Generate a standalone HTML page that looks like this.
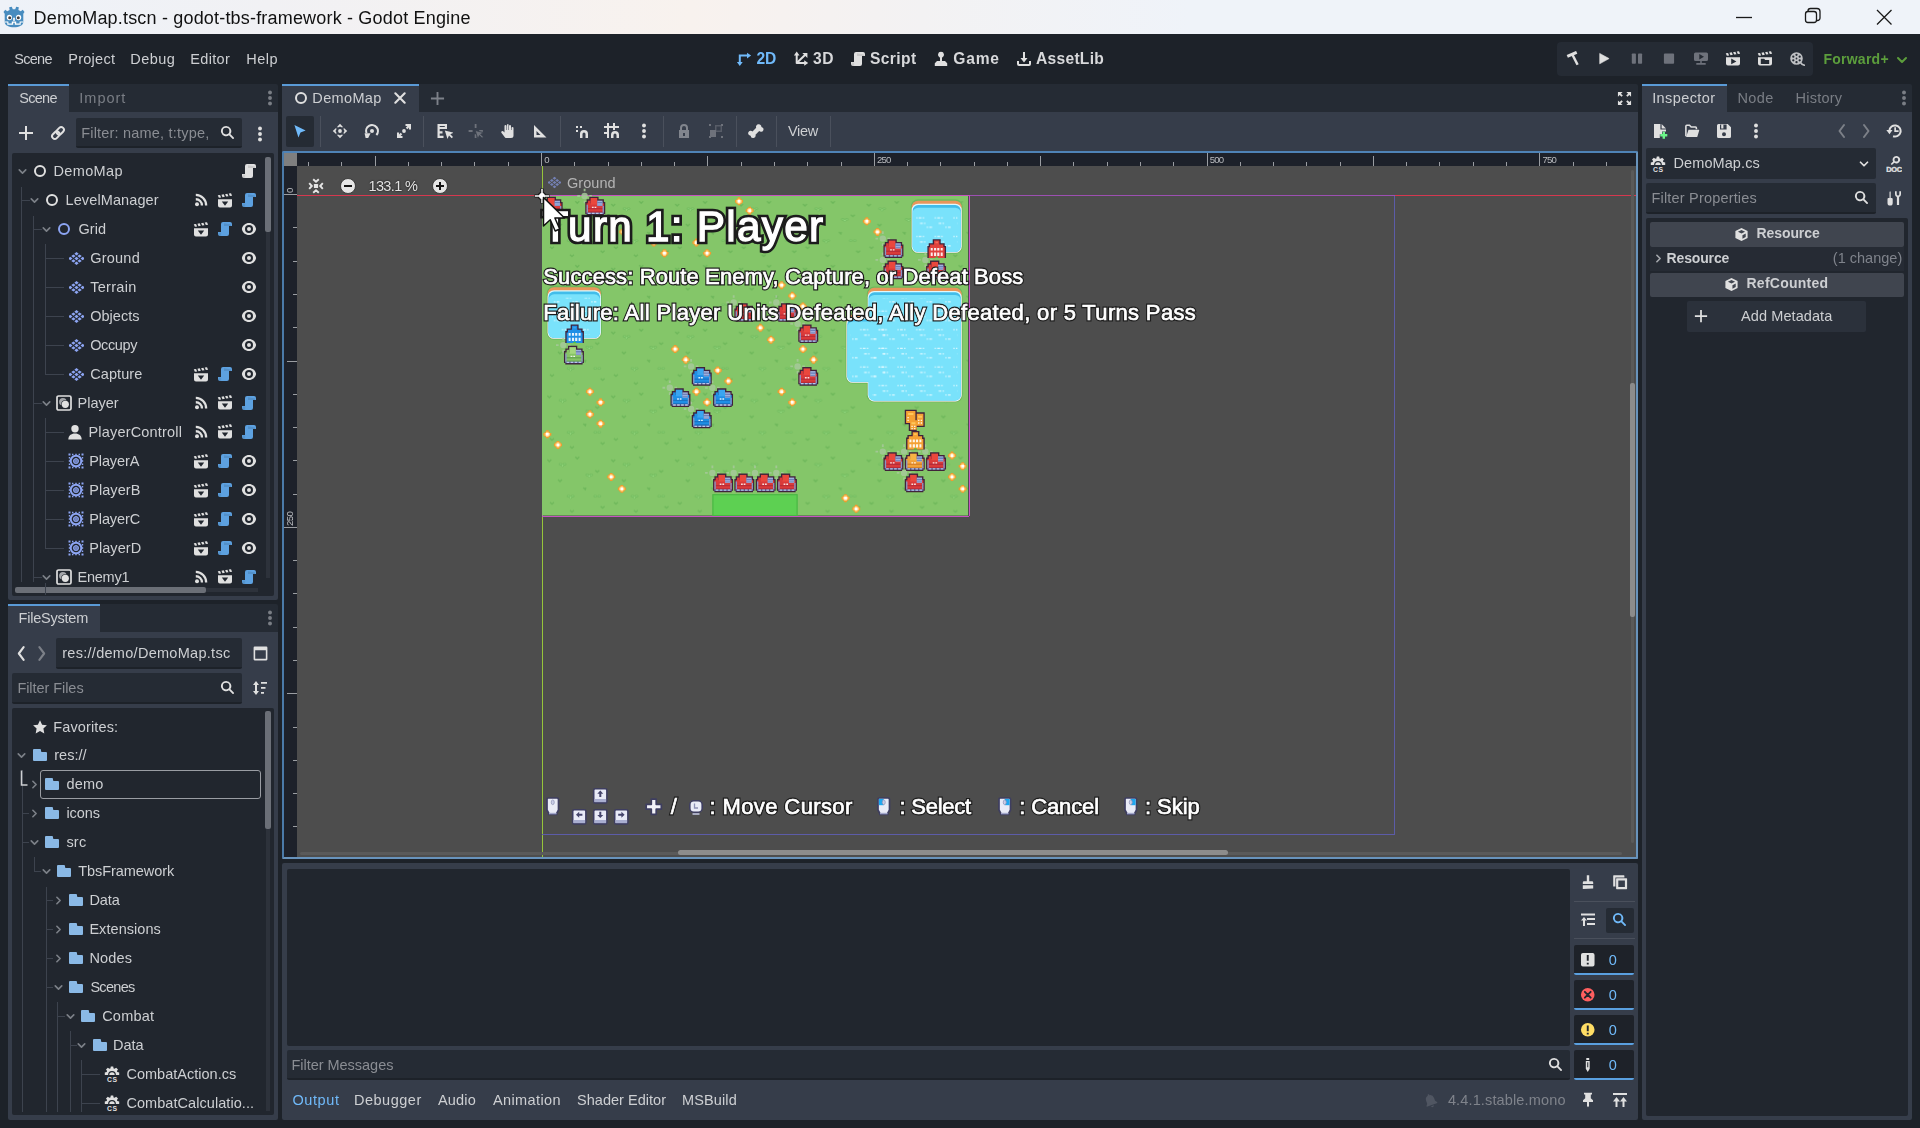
<!DOCTYPE html><html><head><meta charset="utf-8"><title>DemoMap.tscn - Godot Engine</title><style>
html,body{margin:0;padding:0;background:#1d2229}
#r{position:relative;width:1920px;height:1128px;overflow:hidden;background:#1d2229;font-family:"Liberation Sans",sans-serif}
#r div,#r span,#r svg{position:absolute}
#r span{white-space:pre;will-change:opacity}
#r svg{fill:currentColor;overflow:visible}
</style></head><body><svg width="0" height="0" style="position:absolute"><defs><symbol id="i-add" viewBox="0 0 16 16"><path d="M7 1v6H1v2h6v6h2V9h6V7H9V1z"/></symbol><symbol id="i-link" viewBox="0 0 16 16"><g transform="rotate(-45 8 8)" fill="none" stroke="currentColor" stroke-width="2"><rect x="0.8" y="5.3" width="8.2" height="5.4" rx="2.7"/><rect x="7" y="5.3" width="8.2" height="5.4" rx="2.7"/></g></symbol><symbol id="i-search" viewBox="0 0 16 16"><path d="M6.5 1a5.5 5.5 0 1 0 3.1 10.05l3.7 3.7a1 1 0 0 0 1.4-1.4l-3.65-3.7A5.5 5.5 0 0 0 6.5 1zm0 2a3.5 3.5 0 0 1 0 7 3.5 3.5 0 0 1 0-7z"/></symbol><symbol id="i-dots" viewBox="0 0 16 16"><circle cx="8" cy="2.5" r="1.95"/><circle cx="8" cy="8" r="1.95"/><circle cx="8" cy="13.5" r="1.95"/></symbol><symbol id="i-node" viewBox="0 0 16 16"><circle cx="8" cy="8" r="5" fill="none" stroke="currentColor" stroke-width="2"/></symbol><symbol id="i-script" viewBox="0 0 16 16"><path d="M6 1a2 2 0 0 0-2 2v8H1v2a2 2 0 0 0 2 2h7a2 2 0 0 0 2-2V5h3V3a2 2 0 0 0-2-2z"/><path d="M7 2.200v2.800h7.200V3.600z" fill="#000" opacity=".1"/><path d="M1.400 11.500h2.800v3.200a2 2 0 0 1-2.800-1.700z" fill="#000" opacity=".08"/></symbol><symbol id="i-eye" viewBox="0 0 16 16"><path fill-rule="evenodd" d="M8 2C4.44 2 1.53 4.49.94 7.79a1 1 0 0 0 0 .42C1.53 11.51 4.44 14 8 14s6.47-2.49 7.06-5.79a1 1 0 0 0 0-.42C14.47 4.49 11.56 2 8 2zm0 2a4 4 0 0 1 0 8 4 4 0 0 1 0-8zm0 2a2 2 0 0 0 0 4 2 2 0 0 0 0-4z"/></symbol><symbol id="i-signals" viewBox="0 0 16 16"><path d="M2.800 1.800v2.300A9.300 9.300 0 0 1 12 13.400h2.300A11.600 11.600 0 0 0 2.800 1.800zM2.800 6.100v2.300a5 5 0 0 1 5 5h2.300a7.300 7.300 0 0 0-7.300-7.300z"/><circle cx="4" cy="12.200" r="2"/></symbol><symbol id="i-instopt" viewBox="0 0 16 16"><path fill-rule="evenodd" d="M1 6.300v6.200a2 2 0 0 0 2 2h10a2 2 0 0 0 2-2V6.300zm3.800 2.200h6.400L8 12.800z"/><g transform="rotate(-9 1 5)"><path d="M1.200 2.300h2.300l.7 2.600H1.900zM4.900 2.300h2.300l.7 2.600H5.600zM8.600 2.300h2.300l.7 2.600H9.300zM12.300 2.300h2.300l.7 2.600H13z"/></g></symbol><symbol id="i-tilemap" viewBox="0 0 16 16"><g transform="translate(8 8) scale(1 .78) rotate(45)"><rect x="-6.300" y="-6.300" width="3.300" height="3.300"/><rect x="-1.650" y="-6.300" width="3.300" height="3.300"/><rect x="3" y="-6.300" width="3.300" height="3.300"/><rect x="-6.300" y="-1.650" width="3.300" height="3.300"/><rect x="-1.650" y="-1.650" width="3.300" height="3.300"/><rect x="3" y="-1.650" width="3.300" height="3.300"/><rect x="-6.300" y="3" width="3.300" height="3.300"/><rect x="-1.650" y="3" width="3.300" height="3.300"/><rect x="3" y="3" width="3.300" height="3.300"/></g></symbol><symbol id="i-folder" viewBox="0 0 16 16"><path d="M2 2a1 1 0 0 0-1 1v10a1 1 0 0 0 1 1h12a1 1 0 0 0 1-1V6a1 1 0 0 0-1-1h-4a1 1 0 0 1-1-1V3a1 1 0 0 0-1-1z"/></symbol><symbol id="i-star" viewBox="0 0 16 16"><path d="M8 1.300l2.100 4.400 4.800.600-3.500 3.300.9 4.800L8 12l-4.300 2.400.9-4.800L1.100 6.300l4.800-.6z"/></symbol><symbol id="i-chd" viewBox="0 0 16 16"><path d="M4 6l4 4 4-4" fill="none" stroke="currentColor" stroke-width="2" stroke-linecap="round" stroke-linejoin="round"/></symbol><symbol id="i-chr" viewBox="0 0 16 16"><path d="M6 4l4 4-4 4" fill="none" stroke="currentColor" stroke-width="2" stroke-linecap="round" stroke-linejoin="round"/></symbol><symbol id="i-chl" viewBox="0 0 16 16"><path d="M10 2L5.500 8l4.500 6" fill="none" stroke="currentColor" stroke-width="2" stroke-linecap="round" stroke-linejoin="round"/></symbol><symbol id="i-chrr" viewBox="0 0 16 16"><path d="M6 2l4.500 6L6 14" fill="none" stroke="currentColor" stroke-width="2" stroke-linecap="round" stroke-linejoin="round"/></symbol><symbol id="i-cs" viewBox="0 0 16 16"><path d="M6.800 .5l-.4 1.900-1 .4L3.800 1.700 2 3.500l1.100 1.600-.4 1L.8 6.500V9h3.300a3.900 3.900 0 0 1 7.800 0h3.300V6.500l-1.900-.4-.4-1L14 3.500l-1.800-1.800-1.600 1.100-1-.4L9.200.5zM8 6.300A2.700 2.700 0 0 0 5.300 9h5.400A2.700 2.700 0 0 0 8 6.300z"/><text x="8.200" y="15.800" font-size="6.800" font-weight="700" text-anchor="middle" font-family="Liberation Sans, sans-serif" letter-spacing=".5">CS</text></symbol><symbol id="i-cursor" viewBox="0 0 16 16"><path d="M1.500 1l4.300 13.500 2.200-5.500 5.500-2.200z"/></symbol><symbol id="i-move" viewBox="0 0 16 16"><path d="M8 .8L4.800 4.300h2L8 3.400l1.200.9h2zM8 15.200l3.200-3.500h-2L8 12.600l-1.200-.9h-2zM.8 8l3.500 3.200v-2L3.400 8l.9-1.200v-2zM15.200 8l-3.500-3.200v2l.9 1.200-.9 1.200v2z"/><circle cx="8" cy="8" r="1.900"/></symbol><symbol id="i-rotate" viewBox="0 0 16 16"><path d="M12.38 11.95A5.9 5.9 0 1 0 2.53 10.21" fill="none" stroke="currentColor" stroke-width="2.100"/><path d="M.6 10.300h6l-2.400 4.700H1.600z"/><circle cx="8" cy="8" r="2"/></symbol><symbol id="i-scale" viewBox="0 0 16 16"><path d="M9.500 1H15v5.500h-2.100V4.600l-1.600 1.600-1.500-1.500 1.600-1.600H9.500zM6.500 15H1V9.500h2.100v1.900l1.600-1.600 1.500 1.500-1.600 1.600h1.900z"/><circle cx="8" cy="8" r="1.900"/></symbol><symbol id="i-listsel" viewBox="0 0 16 16"><path d="M1 1v14h6v-2.200H3.200v-2.300H6V8.300H3.200V6h7.300V1zm2.200 2h5.100v1H3.200zM8.300 7.500l2.700 8.400 1.500-3.400 2.700 2.700 1.300-1.300-2.700-2.700 3.400-1.500z" fill-rule="evenodd" transform="translate(-.5 0)"/></symbol><symbol id="i-curveadd" viewBox="0 0 16 16"><path d="M6.700 1h1.800v4H6.700zM.6 7.100h4v1.800h-4zM6.700 11.200h1.800v3.700H6.700zM11.200 7.100h3.700v1.800h-3.700z"/><path d="M7.200 7.500l2.700 8.400 1.500-3.400 2.700 2.700 1.300-1.300-2.700-2.700 3.400-1.500z" stroke="#363d4a" stroke-width=".8"/></symbol><symbol id="i-hand" viewBox="0 0 16 16"><path d="M8 1a1 1 0 0 0-1 1v5H6.500V3a1 1 0 0 0-2 0v6.500L3.200 8.300a1.200 1.200 0 0 0-1.800 1.500L5 14.500a2 2 0 0 0 1.500.5H11a2.500 2.500 0 0 0 2.500-2.500V5a1 1 0 0 0-2 0v2H11V3a1 1 0 0 0-2 0v4h-.5V2A1 1 0 0 0 8 1z"/></symbol><symbol id="i-ruler" viewBox="0 0 16 16"><path fill-rule="evenodd" d="M2 2v12.500h12.500zM4.500 8l4 4h-4z"/></symbol><symbol id="i-snap" viewBox="0 0 16 16"><path d="M3 3h2v2H3zM7 3h2v2H7zM3 7h2v2H3zM11 7a4 4 0 0 0-4 4v4h2.500v-4a1.500 1.500 0 0 1 3 0v4H15v-4a4 4 0 0 0-4-4z"/></symbol><symbol id="i-snapgrid" viewBox="0 0 16 16"><path d="M3 0v3H0v2h3v4H0v2h3v4h2V5h4v2h2V5h4V3h-4V0H9v3H5V0zM11 8a4 4 0 0 0-4 4v3h2.500v-3a1.500 1.500 0 0 1 3 0v3H15v-3a4 4 0 0 0-4-4z"/></symbol><symbol id="i-lock" viewBox="0 0 16 16"><path fill-rule="evenodd" d="M8 1a4 4 0 0 0-4 4v2H3v8h10V7h-1V5a4 4 0 0 0-4-4zm0 2a2 2 0 0 1 2 2v2H6V5a2 2 0 0 1 2-2zM7 10h2v3H7z"/></symbol><symbol id="i-group" viewBox="0 0 16 16"><path d="M1 1h2v2H1zM1 13h2v2H1zM13 13h2v2h-2zM13 1h2v2h-2zM2 7h6v7H2z"/><path fill-rule="evenodd" d="M7 2h7v7H7zM8.500 3.500v4h4v-4z" opacity=".6"/></symbol><symbol id="i-bone" viewBox="0 0 16 16"><path d="M10.500 1a2.500 2.500 0 0 0-2.300 3.500L4.500 8.200A2.500 2.500 0 1 0 2.600 12.400a2.500 2.500 0 1 0 4.900-.9l3.700-3.700A2.500 2.500 0 1 0 13.400 3.600 2.500 2.500 0 0 0 10.500 1z" transform="translate(0 .3)"/></symbol><symbol id="i-hammer" viewBox="0 0 16 16"><path d="M2.300 5.300L11.700 1.300" fill="none" stroke="currentColor" stroke-width="3"/><path d="M7.200 3.300L12.600 13.800" fill="none" stroke="currentColor" stroke-width="2.500"/></symbol><symbol id="i-play" viewBox="0 0 16 16"><path d="M3.700 2.400L13.100 7.600 3.700 12.800z" stroke="currentColor" stroke-width=".6" stroke-linejoin="round"/></symbol><symbol id="i-pause" viewBox="0 0 16 16"><rect x="2.800" y="2.500" width="4.100" height="10.300" rx=".8"/><rect x="9" y="2.500" width="4.100" height="10.300" rx=".8"/></symbol><symbol id="i-stop" viewBox="0 0 16 16"><rect x="2.900" y="2.500" width="10.200" height="10.300" rx="1"/></symbol><symbol id="i-remote" viewBox="0 0 16 16"><path fill-rule="evenodd" d="M2.500 1.500h11A1.500 1.500 0 0 1 15 3v5.500a1.500 1.500 0 0 1-1.500 1.500h-11A1.500 1.500 0 0 1 1 8.500V3a1.500 1.500 0 0 1 1.500-1.500zM6.300 3l4.700 2.700-4.700 2.700z"/><path d="M7 10.200h2v1.600H7zM3.300 12h9.400v1.800H3.300z"/></symbol><symbol id="i-playscene" viewBox="0 0 16 16"><path fill-rule="evenodd" d="M1 6.300v6.200a2 2 0 0 0 2 2h10a2 2 0 0 0 2-2V6.300zm5.200 1.300l5.200 2.800-5.200 2.800z"/><g transform="rotate(-9 1 5)"><path d="M1.200 2.300h2.300l.7 2.600H1.900zM4.900 2.300h2.300l.7 2.600H5.600zM8.600 2.300h2.300l.7 2.600H9.300zM12.300 2.300h2.300l.7 2.600H13z"/></g></symbol><symbol id="i-playcustom" viewBox="0 0 16 16"><path fill-rule="evenodd" d="M1 6.300v6.200a2 2 0 0 0 2 2h10a2 2 0 0 0 2-2V6.300zm2.800 1.500h3.400l1 1.100h4v4.200H3.800z"/><g transform="rotate(-9 1 5)"><path d="M1.200 2.300h2.300l.7 2.600H1.900zM4.900 2.300h2.300l.7 2.600H5.600zM8.600 2.300h2.300l.7 2.600H9.300zM12.300 2.300h2.300l.7 2.600H13z"/></g></symbol><symbol id="i-movie" viewBox="0 0 16 16"><path fill-rule="evenodd" d="M7.500 1.200a6.300 6.300 0 1 0 0 12.600 6.300 6.300 0 1 0 0-12.600zM11.85 9.35a1.150 1.150 0 1 0-2.300 0 1.150 1.150 0 1 0 2.300 0zM8.65 11.20a1.150 1.150 0 1 0-2.300 0 1.150 1.150 0 1 0 2.300 0zM5.45 9.35a1.150 1.150 0 1 0-2.300 0 1.150 1.150 0 1 0 2.300 0zM5.45 5.65a1.150 1.150 0 1 0-2.300 0 1.150 1.150 0 1 0 2.300 0zM8.65 3.80a1.150 1.150 0 1 0-2.300 0 1.150 1.150 0 1 0 2.300 0zM11.85 5.65a1.150 1.150 0 1 0-2.300 0 1.150 1.150 0 1 0 2.300 0zM8.400 7.500a.9.900 0 1 0-1.800 0 .9.900 0 1 0 1.800 0z"/><path d="M11.500 11.500c1 1.500 2 2.500 3.700 2.700" fill="none" stroke="currentColor" stroke-width="1.800" stroke-linecap="round"/></symbol><symbol id="i-expand" viewBox="0 0 16 16"><path d="M1 1v5l1.800-1.800 2 2 1.400-1.400-2-2L6 1zM15 1h-5l1.800 1.800-2 2 1.400 1.400 2-2L15 6zM1 15h5l-1.800-1.800 2-2-1.400-1.400-2 2L1 10zM15 15v-5l-1.800 1.800-2-2-1.400 1.400 2 2L10 15z"/></symbol><symbol id="i-newdoc" viewBox="0 0 16 16"><path d="M2 1h6.400v5.600H14v2h-4v2.600H7.800V15H2z"/><path d="M9.600 1l4.400 4.400H9.600z"/><path d="M10.600 8.800v2.300H8.300v2.400h2.300v2.300H13v-2.300h2.300v-2.400H13V8.800z" fill="#6cf58a"/></symbol><symbol id="i-load" viewBox="0 0 16 16"><path d="M1.900 13.200V3.200a.9.900 0 0 1 .9-.9h2.700l1.700 1.700h4.300a.9.900 0 0 1 .9.900v1.400" fill="none" stroke="currentColor" stroke-width="1.600"/><path d="M4.500 6.800h10.200a.5.500 0 0 1 .5.600L13.400 13.500a.8.800 0 0 1-.8.500H2.100z"/></symbol><symbol id="i-save" viewBox="0 0 16 16"><path fill-rule="evenodd" d="M2.500 1A1.500 1.500 0 0 0 1 2.500v11A1.500 1.500 0 0 0 2.500 15h11a1.500 1.500 0 0 0 1.500-1.500V4.300L11.700 1zM4 1.500h6.600v5H4zM8 9.200a2 2 0 0 1 0 4 2 2 0 0 1 0-4z"/><path d="M5.200 1.500h2.200v4H5.200z"/></symbol><symbol id="i-history" viewBox="0 0 16 16"><path d="M3.42 7.51A5.6 5.6 0 1 1 7.08 13.26" fill="none" stroke="currentColor" stroke-width="2"/><path d="M.3 7l3.200 4.300L6.500 7z"/><path d="M8.300 4.300h1.700v3h2.600V9H8.300z"/></symbol><symbol id="i-docsearch" viewBox="0 0 16 16"><path fill-rule="evenodd" d="M10.300 0a3.700 3.700 0 0 0-3.200 5.500L4.700 7.900l1.200 1.200 2.400-2.400A3.700 3.700 0 1 0 10.300 0zm0 1.800a1.900 1.900 0 0 1 0 3.800 1.900 1.900 0 0 1 0-3.800z"/><text x="8" y="15.700" font-size="7.400" font-weight="700" text-anchor="middle" font-family="Liberation Sans, sans-serif" letter-spacing="-.35" stroke="currentColor" stroke-width=".35">DOC</text></symbol><symbol id="i-tools" viewBox="0 0 16 16"><path d="M3.500 2.200L4.100 1l.6 1.200V8h1a1 1 0 0 1 1 1v4a2.600 2.600 0 0 1-5.200 0V9a1 1 0 0 1 1-1h1zM9 1.300v3a3 3 0 0 0 1.900 2.800V15h2.200V7.100A3 3 0 0 0 15 4.300v-3h-1.700v3a1.300 1.300 0 0 1-2.600 0v-3z"/></symbol><symbol id="i-cube" viewBox="0 0 16 16"><path fill-rule="evenodd" d="M8 1L1.500 4.200v7.600L8 15l6.500-3.200V4.200zm0 2.200l3.800 1.900L8 7 4.200 5.100zM9 8.700l3.500-1.700v3.700L9 12.400z"/></symbol><symbol id="i-clear" viewBox="0 0 16 16"><path d="M6.800 1.200h2.400v6H12a1.200 1.200 0 0 1 1.200 1.200V10H2.800V8.400A1.200 1.200 0 0 1 4 7.200h2.800zM2.800 11.200h10.400v3.400L2.800 15z"/></symbol><symbol id="i-copy" viewBox="0 0 16 16"><path fill-rule="evenodd" d="M1.800 1.200a.6.600 0 0 0-.6.600v10.600h2.200V3.400h9V1.800a.6.600 0 0 0-.6-.6zM4.700 4.200a.6.600 0 0 0-.6.600v9.800a.6.600 0 0 0 .6.600h9.800a.6.600 0 0 0 .6-.6V4.800a.6.600 0 0 0-.6-.6zM6.300 6.400h6.600V13H6.300z"/></symbol><symbol id="i-collapse" viewBox="0 0 16 16"><path d="M1 1.500h14v2H1zM7 6h8v2H7zM7 11h8v2H7zM4 5L1 8.500h2V14h2V8.500h2z"/></symbol><symbol id="i-popup" viewBox="0 0 16 16"><path fill-rule="evenodd" d="M3 1a2 2 0 0 0-2 2v10a2 2 0 0 0 2 2h10a2 2 0 0 0 2-2V3a2 2 0 0 0-2-2zm4 2h2v6H7zm0 8h2v2H7z"/></symbol><symbol id="i-pen" viewBox="0 0 16 16"><path d="M6.500 1h3v2h-3zM6 4h4v8l-2 3.500L6 12zm1.500 1.500v5h1v-5z" fill-rule="evenodd"/></symbol><symbol id="i-pin" viewBox="0 0 16 16"><path d="M4 1.500v1.800h1.200v3.700L3 9v1.800h4v4l1 1.200 1-1.200v-4h4V9l-2.200-2V3.300H12V1.500z" transform="translate(0 -.8)"/></symbol><symbol id="i-expbottom" viewBox="0 0 16 16"><path d="M1 1v2h14V1zM4.500 5L1 9.500h2.500V15h2V9.500H8zM11.500 5L8 9.500h2.500V15h2V9.500H15z"/></symbol><symbol id="i-bell" viewBox="0 0 16 16"><path d="M8 1a1 1 0 0 0-1 1v.3A4.500 4.500 0 0 0 3.500 6.700V10L2 12v1h12v-1l-1.500-2V6.700A4.500 4.500 0 0 0 9 2.300V2a1 1 0 0 0-1-1zM6.500 14a1.500 1.500 0 0 0 3 0z" transform="rotate(-20 8 8)"/></symbol><symbol id="i-center" viewBox="0 0 16 16"><g fill="none" stroke="currentColor" stroke-width="1.900"><path d="M5.200 1.200L8 3.800l2.800-2.600M5.200 14.800L8 12.200l2.800 2.600M1.200 5.200L3.800 8l-2.600 2.800M14.800 5.200L12.200 8l2.600 2.800"/></g><rect x="5.900" y="5.900" width="4.200" height="4.200" rx=".6"/></symbol><symbol id="i-tabx" viewBox="0 0 16 16"><path d="M3.300 3.300l9.400 9.400M12.700 3.300L3.300 12.700" fill="none" stroke="currentColor" stroke-width="2.100" stroke-linecap="round"/></symbol><symbol id="i-panels" viewBox="0 0 16 16"><path fill-rule="evenodd" d="M2.500 1.500a1 1 0 0 0-1 1v11a1 1 0 0 0 1 1h11a1 1 0 0 0 1-1v-11a1 1 0 0 0-1-1zM3 5h10v8H3z"/></symbol><symbol id="i-sort" viewBox="0 0 16 16"><path d="M4 1L1 5h2v6H1l3 4 3-4H5V5h2zM9 2h6v1.800H9zM9 7h4.500v1.800H9zM9 12h3v1.800H9z"/></symbol><symbol id="i-d2" viewBox="0 0 16 16"><path d="M2.800 3.600h8.200V1.700L15.100 4.600 11 7.500V5.600H4.800v5.400h1.900L3.800 15.100.9 11h1.900z"/></symbol><symbol id="i-d3" viewBox="0 0 16 16"><path d="M3.700 12.500V3" fill="none" stroke="currentColor" stroke-width="2"/><path d="M3.200 12H12" fill="none" stroke="currentColor" stroke-width="2"/><path d="M3.700 12L12.500 3.500" fill="none" stroke="currentColor" stroke-width="2"/><path d="M.9 4.600L3.700.5l2.800 4.100zM11.200 9.200l4 2.800-4 2.800zM9.300 1.900h5.100V7z"/></symbol><symbol id="i-game" viewBox="0 0 16 16"><path d="M8 .8a3 3 0 0 0-1 5.830V10H4L1.800 12.300V15h12.400v-2.700L12 10H9V6.630A3 3 0 0 0 8 .8z"/></symbol><symbol id="i-assetlib" viewBox="0 0 16 16"><path d="M7 1v6H4.500L8 11.500 11.500 7H9V1zM1 10v3a2 2 0 0 0 2 2h10a2 2 0 0 0 2-2v-3h-2v3H3v-3z"/></symbol><symbol id="i-person" viewBox="0 0 16 16"><circle cx="8" cy="4.700" r="3.700"/><path d="M1.300 15.500c0-3.800 2.700-6 6.700-6s6.700 2.200 6.700 6z"/></symbol><symbol id="i-army" viewBox="0 0 16 16"><rect x="1" y="1" width="14" height="14" rx="1.600" fill="none" stroke="currentColor" stroke-width="1.700"/><circle cx="6.900" cy="6.700" r="3.800" fill="#a4a6aa"/><circle cx="9.300" cy="9.300" r="4.100" fill="#21262e"/><circle cx="9.300" cy="9.300" r="3.600"/></symbol><symbol id="i-unit" viewBox="0 0 16 16"><path d="M.5 .5h2v2h-2zM13.500 .5h2v2h-2zM.5 13.500h2v2h-2zM13.500 13.500h2v2h-2zM4 .8h1.400v1.400H4zM7.300 .8h1.400v1.400H7.300zM10.600 .8H12v1.400h-1.400zM4 13.800h1.400v1.400H4zM7.300 13.800h1.400v1.400H7.300zM10.600 13.800H12v1.400h-1.400zM.8 4h1.400v1.400H.8zM.8 7.300h1.400v1.400H.8zM.8 10.600h1.400V12H.8zM13.800 4h1.400v1.400h-1.400zM13.800 7.300h1.400v1.400h-1.400zM13.800 10.600h1.400V12h-1.400z"/><circle cx="8" cy="8" r="5.300" fill="none" stroke="currentColor" stroke-width="2"/><circle cx="8" cy="8" r="2.300" fill="none" stroke="currentColor" stroke-width="1.100"/><path d="M8 5v6M5 8h6" stroke="currentColor" stroke-width="1"/></symbol><symbol id="i-staterr" viewBox="0 0 16 16"><circle cx="8" cy="8" r="7" fill="#ff5f5f"/><path d="M5 5l6 6M11 5l-6 6" stroke="#21262e" stroke-width="2" stroke-linecap="round"/></symbol><symbol id="i-statwarn" viewBox="0 0 16 16"><circle cx="8" cy="8" r="7" fill="#ffdd65"/><path d="M7 3.500h2v6H7zM7 11h2v2H7z" fill="#21262e"/></symbol><symbol id="i-zminus" viewBox="0 0 16 16"><circle cx="8" cy="8" r="7.500" stroke="#2b2b2b" stroke-width=".8"/><path d="M4 7h8v2H4z" fill="#141414"/></symbol><symbol id="i-zplus" viewBox="0 0 16 16"><circle cx="8" cy="8" r="7.500" stroke="#2b2b2b" stroke-width=".8"/><path d="M4 7h3V4h2v3h3v2H9v3H7V9H4z" fill="#141414"/></symbol></defs></svg><div id="r">
<div style="left:0px;top:0px;width:1920px;height:34px;background:linear-gradient(90deg,#eef2f8 0,#f1f1f4 14%,#f8f2ee 36%,#f3f2f3 48%,#eff3f9 62%,#eff3f9 100%);"></div>
<svg style="left:2px;top:6px;width:24px;height:23px" viewBox="0 0 24 22" preserveAspectRatio="none"><path d="M7.200 1.200l.4 2.600-2.300 1.300L3.200 3.600 1.500 5.800l1.200 1.700v7.800c0 3.200 4.300 5 9.300 5s9.300-1.800 9.300-5V7.500l1.200-1.700-1.700-2.200-2.100 1.500-2.300-1.300.4-2.600-2.600-.5-1 2.400h-2.400l-1-2.400z" fill="#478cbf"/><circle cx="7.400" cy="11" r="2.600" fill="#fff"/><circle cx="16.600" cy="11" r="2.600" fill="#fff"/><circle cx="7.700" cy="11.200" r="1.500" fill="#414042"/><circle cx="16.300" cy="11.200" r="1.500" fill="#414042"/><rect x="11.200" y="11" width="1.600" height="3.400" rx=".8" fill="#fff"/><path d="M2.800 14.800h3.600v2h3.400v-1.900h4.400v1.900h3.400v-2h3.600v1h-2.500v2.100H12.800v-1.900h-1.600v1.900H5.300v-2.100H2.800z" fill="#fff"/></svg>
<span id="t0" style="left:33.50px;top:7.96px;font-size:18px;line-height:20px;color:#111;letter-spacing:0.183px;">DemoMap.tscn - godot-tbs-framework - Godot Engine</span>
<svg style="left:1730px;top:5px;width:180px;height:24px" viewBox="0 0 180 24"><g fill="none" stroke="#1a1a1a" stroke-width="1.300"><path d="M6 12.500h16"/><rect x="75.500" y="6.500" width="11" height="11" rx="2.500"/><path d="M78 6.500V6a2.500 2.500 0 0 1 2.500-2.500H87A3 3 0 0 1 90 6.500V13a2.500 2.500 0 0 1-2.500 2.500H87"/><path d="M147 5l14.500 14.500M161.500 5L147 19.500"/></g></svg>
<span id="t1" style="left:14.20px;top:49.18px;font-size:14.5px;line-height:20px;color:#cdcfd2;letter-spacing:-0.689px;">Scene</span>
<span id="t2" style="left:68.20px;top:49.18px;font-size:14.5px;line-height:20px;color:#cdcfd2;letter-spacing:0.282px;">Project</span>
<span id="t3" style="left:130.30px;top:49.18px;font-size:14.5px;line-height:20px;color:#cdcfd2;letter-spacing:0.432px;">Debug</span>
<span id="t4" style="left:190.30px;top:49.18px;font-size:14.5px;line-height:20px;color:#cdcfd2;letter-spacing:0.329px;">Editor</span>
<span id="t5" style="left:246.20px;top:49.18px;font-size:14.5px;line-height:20px;color:#cdcfd2;letter-spacing:0.513px;">Help</span>
<svg style="left:736.0px;top:51.1px;width:16px;height:16px;color:#70bafa;"><use href="#i-d2"/></svg>
<span id="t6" style="left:756.60px;top:49.39px;font-size:15.6px;line-height:20px;color:#70bafa;font-weight:700;letter-spacing:-0.186px;">2D</span>
<svg style="left:793.0px;top:51.1px;width:16px;height:16px;color:#e0e0e0;"><use href="#i-d3"/></svg>
<span id="t7" style="left:813.10px;top:49.39px;font-size:15.6px;line-height:20px;color:#d8d9db;font-weight:700;letter-spacing:0.420px;">3D</span>
<svg style="left:850.0px;top:51.1px;width:16px;height:16px;color:#e0e0e0;"><use href="#i-script"/></svg>
<span id="t8" style="left:870.00px;top:49.39px;font-size:15.6px;line-height:20px;color:#d8d9db;font-weight:700;letter-spacing:0.400px;">Script</span>
<svg style="left:932.8px;top:51.1px;width:16px;height:16px;color:#e0e0e0;"><use href="#i-game"/></svg>
<span id="t9" style="left:953.30px;top:49.39px;font-size:15.6px;line-height:20px;color:#d8d9db;font-weight:700;letter-spacing:0.773px;">Game</span>
<svg style="left:1015.8px;top:51.1px;width:16px;height:16px;color:#e0e0e0;"><use href="#i-assetlib"/></svg>
<span id="t10" style="left:1036.00px;top:49.39px;font-size:15.6px;line-height:20px;color:#d8d9db;font-weight:700;letter-spacing:0.280px;">AssetLib</span>
<div style="left:1557px;top:42px;width:256px;height:34px;background:#252b34;border-radius:4px"></div>
<svg style="left:1565.2px;top:51.3px;width:16px;height:16px;color:#e0e0e0;"><use href="#i-hammer"/></svg>
<svg style="left:1596.3px;top:51.3px;width:16px;height:16px;color:#e0e0e0;"><use href="#i-play"/></svg>
<svg style="left:1629.0px;top:51.3px;width:16px;height:16px;color:#6e727b;"><use href="#i-pause"/></svg>
<svg style="left:1661.0px;top:51.3px;width:16px;height:16px;color:#6e727b;"><use href="#i-stop"/></svg>
<svg style="left:1693.0px;top:51.3px;width:16px;height:16px;color:#6e727b;"><use href="#i-remote"/></svg>
<svg style="left:1725.0px;top:51.3px;width:16px;height:16px;color:#e0e0e0;"><use href="#i-playscene"/></svg>
<svg style="left:1757.0px;top:51.3px;width:16px;height:16px;color:#e0e0e0;"><use href="#i-playcustom"/></svg>
<svg style="left:1789.3px;top:51.3px;width:16px;height:16px;color:#bfc1c4;"><use href="#i-movie"/></svg>
<span id="t11" style="left:1823.40px;top:49.15px;font-size:14px;line-height:20px;color:#5c9e3c;font-weight:700;letter-spacing:0.252px;">Forward+</span>
<svg style="left:1894.0px;top:51.5px;width:16px;height:16px;color:#5c9e3c;"><use href="#i-chd"/></svg>
<div style="left:8px;top:84px;width:270px;height:28px;background:#252b34;border-radius:2px 2px 0 0"></div>
<div style="left:8px;top:84px;width:61px;height:28px;background:#363d4a;"></div>
<div style="left:8px;top:84px;width:61px;height:2px;background:#5a9ad6;"></div>
<div style="left:8px;top:112px;width:270px;height:488px;background:#363d4a;border-radius:0 0 2px 2px"></div>
<span id="t12" style="left:19.20px;top:87.78px;font-size:14.5px;line-height:20px;color:#cdcfd2;letter-spacing:-0.689px;">Scene</span>
<span id="t13" style="left:79.30px;top:87.78px;font-size:14.5px;line-height:20px;color:#7a7e85;letter-spacing:0.987px;">Import</span>
<svg style="left:262.0px;top:90.0px;width:16px;height:16px;color:#7a7e85;"><use href="#i-dots"/></svg>
<svg style="left:18.0px;top:125.0px;width:16px;height:16px;color:#e0e0e0;"><use href="#i-add"/></svg>
<svg style="left:50.0px;top:125.0px;width:16px;height:16px;color:#e0e0e0;"><use href="#i-link"/></svg>
<div style="left:76px;top:118px;width:166px;height:30px;background:#252b34;border-radius:2px;border-bottom:2px solid #1d2229;box-sizing:border-box"></div>
<span id="t14" style="left:81.20px;top:123.18px;font-size:14.5px;line-height:20px;color:#8a8d93;letter-spacing:0.197px;">Filter: name, t:type,</span>
<svg style="left:220.0px;top:125.2px;width:15px;height:15px;color:#e0e0e0;"><use href="#i-search"/></svg>
<svg style="left:252.0px;top:125.5px;width:16px;height:16px;color:#e0e0e0;"><use href="#i-dots"/></svg>
<div style="left:12px;top:153px;width:262px;height:443px;background:#21262e;border-radius:2px"></div>
<div style="left:265px;top:156.7px;width:6px;height:75px;background:#6b6f77;border-radius:2px"></div>
<div style="left:266px;top:232px;width:4px;height:346px;background:#2d323b;"></div>
<div style="left:15px;top:587.3px;width:191px;height:5.5px;background:#6b6f77;border-radius:2px"></div>
<div style="left:206px;top:588.3px;width:52px;height:3.5px;background:#2d323b;"></div>
<div style="left:21px;top:186.5px;width:1px;height:395.5px;background:#3d434e;"></div>
<div style="left:21px;top:200px;width:9px;height:1px;background:#3d434e;"></div>
<div style="left:33px;top:215.5px;width:1px;height:366.5px;background:#3d434e;"></div>
<div style="left:33px;top:229px;width:9px;height:1px;background:#3d434e;"></div>
<div style="left:33px;top:403px;width:9px;height:1px;background:#3d434e;"></div>
<div style="left:33px;top:577px;width:9px;height:1px;background:#3d434e;"></div>
<div style="left:45px;top:244px;width:1px;height:130px;background:#3d434e;"></div>
<div style="left:45px;top:258px;width:19px;height:1px;background:#3d434e;"></div>
<div style="left:45px;top:287px;width:19px;height:1px;background:#3d434e;"></div>
<div style="left:45px;top:316px;width:19px;height:1px;background:#3d434e;"></div>
<div style="left:45px;top:345px;width:19px;height:1px;background:#3d434e;"></div>
<div style="left:45px;top:374px;width:19px;height:1px;background:#3d434e;"></div>
<div style="left:45px;top:418px;width:1px;height:130px;background:#3d434e;"></div>
<div style="left:45px;top:432px;width:19px;height:1px;background:#3d434e;"></div>
<div style="left:45px;top:461px;width:19px;height:1px;background:#3d434e;"></div>
<div style="left:45px;top:490px;width:19px;height:1px;background:#3d434e;"></div>
<div style="left:45px;top:519px;width:19px;height:1px;background:#3d434e;"></div>
<div style="left:45px;top:548px;width:19px;height:1px;background:#3d434e;"></div>
<div style="left:45px;top:583px;width:1px;height:12px;background:#3d434e;"></div>
<svg style="left:15.5px;top:165.1px;width:13px;height:13px;color:#7c8088;"><use href="#i-chd"/></svg>
<svg style="left:32.0px;top:163.3px;width:16px;height:16px;color:#e0e0e0;"><use href="#i-node"/></svg>
<span id="t15" style="left:53.50px;top:161.38px;font-size:14.5px;line-height:20px;color:#cdcfd2;letter-spacing:0.361px;">DemoMap</span>
<svg style="left:241.0px;top:163.3px;width:16px;height:16px;color:#e0e0e0;"><use href="#i-script"/></svg>
<svg style="left:27.5px;top:194.1px;width:13px;height:13px;color:#7c8088;"><use href="#i-chd"/></svg>
<svg style="left:44.0px;top:192.3px;width:16px;height:16px;color:#e0e0e0;"><use href="#i-node"/></svg>
<span id="t16" style="left:65.50px;top:190.38px;font-size:14.5px;line-height:20px;color:#cdcfd2;letter-spacing:0.111px;">LevelManager</span>
<svg style="left:241.0px;top:192.3px;width:16px;height:16px;color:#5da1e0;"><use href="#i-script"/></svg>
<svg style="left:217.0px;top:192.6px;width:16px;height:16px;color:#e0e0e0;"><use href="#i-instopt"/></svg>
<svg style="left:193.0px;top:192.3px;width:16px;height:16px;color:#e0e0e0;"><use href="#i-signals"/></svg>
<svg style="left:39.5px;top:223.0px;width:13px;height:13px;color:#7c8088;"><use href="#i-chd"/></svg>
<svg style="left:56.0px;top:221.2px;width:16px;height:16px;color:#8da5f3;"><use href="#i-node"/></svg>
<span id="t17" style="left:78.50px;top:219.28px;font-size:14.5px;line-height:20px;color:#cdcfd2;letter-spacing:0.053px;">Grid</span>
<svg style="left:241.0px;top:221.2px;width:16px;height:16px;color:#e0e0e0;"><use href="#i-eye"/></svg>
<svg style="left:217.0px;top:221.2px;width:16px;height:16px;color:#5da1e0;"><use href="#i-script"/></svg>
<svg style="left:193.0px;top:221.5px;width:16px;height:16px;color:#e0e0e0;"><use href="#i-instopt"/></svg>
<svg style="left:68.5px;top:250.7px;width:15px;height:15px;color:#8da5f3;"><use href="#i-tilemap"/></svg>
<span id="t18" style="left:90.20px;top:248.28px;font-size:14.5px;line-height:20px;color:#cdcfd2;letter-spacing:0.237px;">Ground</span>
<svg style="left:241.0px;top:250.2px;width:16px;height:16px;color:#e0e0e0;"><use href="#i-eye"/></svg>
<svg style="left:68.5px;top:279.7px;width:15px;height:15px;color:#8da5f3;"><use href="#i-tilemap"/></svg>
<span id="t19" style="left:90.20px;top:277.28px;font-size:14.5px;line-height:20px;color:#cdcfd2;letter-spacing:0.290px;">Terrain</span>
<svg style="left:241.0px;top:279.2px;width:16px;height:16px;color:#e0e0e0;"><use href="#i-eye"/></svg>
<svg style="left:68.5px;top:308.7px;width:15px;height:15px;color:#8da5f3;"><use href="#i-tilemap"/></svg>
<span id="t20" style="left:90.20px;top:306.28px;font-size:14.5px;line-height:20px;color:#cdcfd2;letter-spacing:0.015px;">Objects</span>
<svg style="left:241.0px;top:308.2px;width:16px;height:16px;color:#e0e0e0;"><use href="#i-eye"/></svg>
<svg style="left:68.5px;top:337.7px;width:15px;height:15px;color:#8da5f3;"><use href="#i-tilemap"/></svg>
<span id="t21" style="left:90.20px;top:335.28px;font-size:14.5px;line-height:20px;color:#cdcfd2;letter-spacing:-0.382px;">Occupy</span>
<svg style="left:241.0px;top:337.2px;width:16px;height:16px;color:#e0e0e0;"><use href="#i-eye"/></svg>
<svg style="left:68.5px;top:366.7px;width:15px;height:15px;color:#8da5f3;"><use href="#i-tilemap"/></svg>
<span id="t22" style="left:90.20px;top:364.28px;font-size:14.5px;line-height:20px;color:#cdcfd2;letter-spacing:0.079px;">Capture</span>
<svg style="left:241.0px;top:366.2px;width:16px;height:16px;color:#e0e0e0;"><use href="#i-eye"/></svg>
<svg style="left:217.0px;top:366.2px;width:16px;height:16px;color:#5da1e0;"><use href="#i-script"/></svg>
<svg style="left:193.0px;top:366.5px;width:16px;height:16px;color:#e0e0e0;"><use href="#i-instopt"/></svg>
<svg style="left:39.5px;top:396.6px;width:13px;height:13px;color:#7c8088;"><use href="#i-chd"/></svg>
<svg style="left:56.0px;top:394.8px;width:16px;height:16px;color:#e0e0e0;"><use href="#i-army"/></svg>
<span id="t23" style="left:77.50px;top:392.88px;font-size:14.5px;line-height:20px;color:#cdcfd2;">Player</span>
<svg style="left:241.0px;top:394.8px;width:16px;height:16px;color:#5da1e0;"><use href="#i-script"/></svg>
<svg style="left:217.0px;top:395.1px;width:16px;height:16px;color:#e0e0e0;"><use href="#i-instopt"/></svg>
<svg style="left:193.0px;top:394.8px;width:16px;height:16px;color:#e0e0e0;"><use href="#i-signals"/></svg>
<svg style="left:67.4px;top:424.1px;width:16px;height:16px;color:#e0e0e0;"><use href="#i-person"/></svg>
<span id="t24" style="left:88.40px;top:422.18px;font-size:14.5px;line-height:20px;color:#cdcfd2;letter-spacing:0.196px;">PlayerControll</span>
<svg style="left:241.0px;top:424.1px;width:16px;height:16px;color:#5da1e0;"><use href="#i-script"/></svg>
<svg style="left:217.0px;top:424.4px;width:16px;height:16px;color:#e0e0e0;"><use href="#i-instopt"/></svg>
<svg style="left:193.0px;top:424.1px;width:16px;height:16px;color:#e0e0e0;"><use href="#i-signals"/></svg>
<svg style="left:68.0px;top:453.4px;width:16px;height:16px;color:#8da5f3;"><use href="#i-unit"/></svg>
<span id="t25" style="left:89.20px;top:451.48px;font-size:14.5px;line-height:20px;color:#cdcfd2;letter-spacing:-0.102px;">PlayerA</span>
<svg style="left:241.0px;top:453.4px;width:16px;height:16px;color:#e0e0e0;"><use href="#i-eye"/></svg>
<svg style="left:217.0px;top:453.4px;width:16px;height:16px;color:#5da1e0;"><use href="#i-script"/></svg>
<svg style="left:193.0px;top:453.7px;width:16px;height:16px;color:#e0e0e0;"><use href="#i-instopt"/></svg>
<svg style="left:68.0px;top:482.4px;width:16px;height:16px;color:#8da5f3;"><use href="#i-unit"/></svg>
<span id="t26" style="left:89.20px;top:480.48px;font-size:14.5px;line-height:20px;color:#cdcfd2;letter-spacing:0.066px;">PlayerB</span>
<svg style="left:241.0px;top:482.4px;width:16px;height:16px;color:#e0e0e0;"><use href="#i-eye"/></svg>
<svg style="left:217.0px;top:482.4px;width:16px;height:16px;color:#5da1e0;"><use href="#i-script"/></svg>
<svg style="left:193.0px;top:482.7px;width:16px;height:16px;color:#e0e0e0;"><use href="#i-instopt"/></svg>
<svg style="left:68.0px;top:511.4px;width:16px;height:16px;color:#8da5f3;"><use href="#i-unit"/></svg>
<span id="t27" style="left:89.20px;top:509.48px;font-size:14.5px;line-height:20px;color:#cdcfd2;letter-spacing:-0.100px;">PlayerC</span>
<svg style="left:241.0px;top:511.4px;width:16px;height:16px;color:#e0e0e0;"><use href="#i-eye"/></svg>
<svg style="left:217.0px;top:511.4px;width:16px;height:16px;color:#5da1e0;"><use href="#i-script"/></svg>
<svg style="left:193.0px;top:511.7px;width:16px;height:16px;color:#e0e0e0;"><use href="#i-instopt"/></svg>
<svg style="left:68.0px;top:540.4px;width:16px;height:16px;color:#8da5f3;"><use href="#i-unit"/></svg>
<span id="t28" style="left:89.20px;top:538.48px;font-size:14.5px;line-height:20px;color:#cdcfd2;letter-spacing:0.065px;">PlayerD</span>
<svg style="left:241.0px;top:540.4px;width:16px;height:16px;color:#e0e0e0;"><use href="#i-eye"/></svg>
<svg style="left:217.0px;top:540.4px;width:16px;height:16px;color:#5da1e0;"><use href="#i-script"/></svg>
<svg style="left:193.0px;top:540.7px;width:16px;height:16px;color:#e0e0e0;"><use href="#i-instopt"/></svg>
<svg style="left:39.5px;top:570.7px;width:13px;height:13px;color:#7c8088;"><use href="#i-chd"/></svg>
<svg style="left:56.0px;top:568.9px;width:16px;height:16px;color:#e0e0e0;"><use href="#i-army"/></svg>
<span id="t29" style="left:77.50px;top:566.98px;font-size:14.5px;line-height:20px;color:#cdcfd2;letter-spacing:-0.227px;">Enemy1</span>
<svg style="left:241.0px;top:568.9px;width:16px;height:16px;color:#5da1e0;"><use href="#i-script"/></svg>
<svg style="left:217.0px;top:569.2px;width:16px;height:16px;color:#e0e0e0;"><use href="#i-instopt"/></svg>
<svg style="left:193.0px;top:568.9px;width:16px;height:16px;color:#e0e0e0;"><use href="#i-signals"/></svg>
<div style="left:8px;top:604px;width:270px;height:28px;background:#252b34;border-radius:2px 2px 0 0"></div>
<div style="left:8px;top:604px;width:92px;height:28px;background:#363d4a;"></div>
<div style="left:8px;top:604px;width:92px;height:2px;background:#5a9ad6;"></div>
<div style="left:8px;top:632px;width:270px;height:488px;background:#363d4a;border-radius:0 0 2px 2px"></div>
<span id="t30" style="left:18.50px;top:607.78px;font-size:14.5px;line-height:20px;color:#cdcfd2;letter-spacing:-0.215px;">FileSystem</span>
<svg style="left:262.0px;top:610.0px;width:16px;height:16px;color:#7a7e85;"><use href="#i-dots"/></svg>
<svg style="left:13.0px;top:644.5px;width:17px;height:17px;color:#e0e0e0;"><use href="#i-chl"/></svg>
<svg style="left:33.0px;top:644.5px;width:17px;height:17px;color:#7c8088;"><use href="#i-chrr"/></svg>
<div style="left:56px;top:638px;width:186px;height:30.5px;background:#252b34;border-radius:2px;border-bottom:2px solid #1d2229;box-sizing:border-box"></div>
<span id="t31" style="left:62.20px;top:642.58px;font-size:14.5px;line-height:20px;color:#cdcfd2;letter-spacing:0.288px;">res://demo/DemoMap.tsc</span>
<svg style="left:251.5px;top:644.5px;width:17px;height:17px;color:#e0e0e0;"><use href="#i-panels"/></svg>
<div style="left:12px;top:673.3px;width:230px;height:30.5px;background:#252b34;border-radius:2px;border-bottom:2px solid #1d2229;box-sizing:border-box"></div>
<span id="t32" style="left:17.40px;top:677.88px;font-size:14.5px;line-height:20px;color:#8a8d93;letter-spacing:-0.057px;">Filter Files</span>
<svg style="left:220.0px;top:680.1px;width:15px;height:15px;color:#e0e0e0;"><use href="#i-search"/></svg>
<svg style="left:252.0px;top:679.6px;width:16px;height:16px;color:#e0e0e0;"><use href="#i-sort"/></svg>
<div style="left:12px;top:708px;width:262px;height:407px;background:#21262e;border-radius:2px"></div>
<div style="left:265px;top:711.3px;width:6px;height:117.5px;background:#6b6f77;border-radius:2px"></div>
<div style="left:266px;top:829px;width:4px;height:282px;background:#2d323b;"></div>
<div style="left:21.7px;top:770px;width:1px;height:342px;background:#3d434e;"></div>
<div style="left:21.7px;top:813px;width:7.300000000000001px;height:1px;background:#3d434e;"></div>
<div style="left:21.7px;top:842px;width:7.300000000000001px;height:1px;background:#3d434e;"></div>
<svg style="left:19px;top:769px;width:12px;height:18px" viewBox="0 0 12 18"><path d="M2.500 1.500v14.500h6" fill="none" stroke="#cdcfd2" stroke-width="1.500"/></svg>
<div style="left:33.5px;top:857px;width:1px;height:14px;background:#3d434e;"></div>
<div style="left:33.5px;top:871px;width:7.5px;height:1px;background:#3d434e;"></div>
<div style="left:45.6px;top:886.5px;width:1px;height:225.5px;background:#3d434e;"></div>
<div style="left:45.6px;top:900px;width:7.399999999999999px;height:1px;background:#3d434e;"></div>
<div style="left:45.6px;top:929px;width:7.399999999999999px;height:1px;background:#3d434e;"></div>
<div style="left:45.6px;top:958px;width:7.399999999999999px;height:1px;background:#3d434e;"></div>
<div style="left:45.6px;top:987px;width:7.399999999999999px;height:1px;background:#3d434e;"></div>
<div style="left:57.4px;top:1002px;width:1px;height:110px;background:#3d434e;"></div>
<div style="left:57.4px;top:1016px;width:7.600000000000001px;height:1px;background:#3d434e;"></div>
<div style="left:69.5px;top:1031px;width:1px;height:81px;background:#3d434e;"></div>
<div style="left:69.5px;top:1045px;width:7.5px;height:1px;background:#3d434e;"></div>
<div style="left:81.3px;top:1060px;width:1px;height:52px;background:#3d434e;"></div>
<div style="left:81.3px;top:1074px;width:18.700000000000003px;height:1px;background:#3d434e;"></div>
<div style="left:81.3px;top:1103px;width:18.700000000000003px;height:1px;background:#3d434e;"></div>
<div style="left:40.3px;top:770px;width:220.7px;height:28.7px;background:transparent;border:1px solid #9a9da3;border-radius:3px;box-sizing:border-box"></div>
<svg style="left:31.9px;top:718.8px;width:16px;height:16px;color:#e0e0e0;"><use href="#i-star"/></svg>
<span id="t33" style="left:53.20px;top:716.88px;font-size:14.5px;line-height:20px;color:#cdcfd2;letter-spacing:0.141px;">Favorites:</span>
<svg style="left:15.4px;top:748.7px;width:13px;height:13px;color:#7c8088;"><use href="#i-chd"/></svg>
<svg style="left:31.9px;top:746.9px;width:16px;height:16px;color:#8ab9e6;"><use href="#i-folder"/></svg>
<span id="t34" style="left:54.20px;top:744.98px;font-size:14.5px;line-height:20px;color:#cdcfd2;letter-spacing:0.038px;">res://</span>
<svg style="left:27.6px;top:778.2px;width:13px;height:13px;color:#7c8088;"><use href="#i-chr"/></svg>
<svg style="left:43.9px;top:776.4px;width:16px;height:16px;color:#8ab9e6;"><use href="#i-folder"/></svg>
<span id="t35" style="left:66.40px;top:774.48px;font-size:14.5px;line-height:20px;color:#cdcfd2;letter-spacing:0.231px;">demo</span>
<svg style="left:27.6px;top:807.0px;width:13px;height:13px;color:#7c8088;"><use href="#i-chr"/></svg>
<svg style="left:43.9px;top:805.2px;width:16px;height:16px;color:#8ab9e6;"><use href="#i-folder"/></svg>
<span id="t36" style="left:66.40px;top:803.28px;font-size:14.5px;line-height:20px;color:#cdcfd2;letter-spacing:-0.054px;">icons</span>
<svg style="left:27.6px;top:835.8px;width:13px;height:13px;color:#7c8088;"><use href="#i-chd"/></svg>
<svg style="left:43.9px;top:834.0px;width:16px;height:16px;color:#8ab9e6;"><use href="#i-folder"/></svg>
<span id="t37" style="left:66.40px;top:832.08px;font-size:14.5px;line-height:20px;color:#cdcfd2;letter-spacing:0.203px;">src</span>
<svg style="left:39.6px;top:864.7px;width:13px;height:13px;color:#7c8088;"><use href="#i-chd"/></svg>
<svg style="left:56.1px;top:862.9px;width:16px;height:16px;color:#8ab9e6;"><use href="#i-folder"/></svg>
<span id="t38" style="left:78.30px;top:860.98px;font-size:14.5px;line-height:20px;color:#cdcfd2;letter-spacing:-0.076px;">TbsFramework</span>
<svg style="left:51.9px;top:893.8px;width:13px;height:13px;color:#7c8088;"><use href="#i-chr"/></svg>
<svg style="left:67.9px;top:892.0px;width:16px;height:16px;color:#8ab9e6;"><use href="#i-folder"/></svg>
<span id="t39" style="left:89.40px;top:890.08px;font-size:14.5px;line-height:20px;color:#cdcfd2;letter-spacing:-0.092px;">Data</span>
<svg style="left:51.9px;top:922.8px;width:13px;height:13px;color:#7c8088;"><use href="#i-chr"/></svg>
<svg style="left:67.9px;top:921.0px;width:16px;height:16px;color:#8ab9e6;"><use href="#i-folder"/></svg>
<span id="t40" style="left:89.40px;top:919.08px;font-size:14.5px;line-height:20px;color:#cdcfd2;letter-spacing:0.057px;">Extensions</span>
<svg style="left:51.9px;top:951.8px;width:13px;height:13px;color:#7c8088;"><use href="#i-chr"/></svg>
<svg style="left:67.9px;top:950.0px;width:16px;height:16px;color:#8ab9e6;"><use href="#i-folder"/></svg>
<span id="t41" style="left:89.40px;top:948.08px;font-size:14.5px;line-height:20px;color:#cdcfd2;letter-spacing:0.180px;">Nodes</span>
<svg style="left:51.9px;top:980.8px;width:13px;height:13px;color:#7c8088;"><use href="#i-chd"/></svg>
<svg style="left:67.9px;top:979.0px;width:16px;height:16px;color:#8ab9e6;"><use href="#i-folder"/></svg>
<span id="t42" style="left:90.40px;top:977.08px;font-size:14.5px;line-height:20px;color:#cdcfd2;letter-spacing:-0.703px;">Scenes</span>
<svg style="left:63.5px;top:1009.6px;width:13px;height:13px;color:#7c8088;"><use href="#i-chd"/></svg>
<svg style="left:80.0px;top:1007.8px;width:16px;height:16px;color:#8ab9e6;"><use href="#i-folder"/></svg>
<span id="t43" style="left:102.20px;top:1005.88px;font-size:14.5px;line-height:20px;color:#cdcfd2;letter-spacing:0.209px;">Combat</span>
<svg style="left:75.3px;top:1038.8px;width:13px;height:13px;color:#7c8088;"><use href="#i-chd"/></svg>
<svg style="left:91.8px;top:1037.0px;width:16px;height:16px;color:#8ab9e6;"><use href="#i-folder"/></svg>
<span id="t44" style="left:113.10px;top:1035.08px;font-size:14.5px;line-height:20px;color:#cdcfd2;letter-spacing:-0.025px;">Data</span>
<svg style="left:104.1px;top:1066.2px;width:16px;height:16px;color:#e0e0e0;"><use href="#i-cs"/></svg>
<span id="t45" style="left:126.40px;top:1064.28px;font-size:14.5px;line-height:20px;color:#cdcfd2;letter-spacing:0.017px;">CombatAction.cs</span>
<svg style="left:104.1px;top:1095.2px;width:16px;height:16px;color:#e0e0e0;"><use href="#i-cs"/></svg>
<span id="t46" style="left:126.40px;top:1093.28px;font-size:14.5px;line-height:20px;color:#cdcfd2;letter-spacing:0.061px;">CombatCalculatio...</span>
<div style="left:282px;top:84px;width:1356px;height:28px;background:#252b34;border-radius:2px 2px 0 0"></div>
<div style="left:282px;top:84px;width:137px;height:28px;background:#363d4a;"></div>
<div style="left:282px;top:84px;width:137px;height:2px;background:#5a9ad6;"></div>
<svg style="left:293.0px;top:90.0px;width:16px;height:16px;color:#e0e0e0;"><use href="#i-node"/></svg>
<span id="t47" style="left:312.30px;top:88.28px;font-size:14.5px;line-height:20px;color:#cdcfd2;letter-spacing:0.361px;">DemoMap</span>
<svg style="left:392.2px;top:90.3px;width:16px;height:16px;color:#e0e0e0;"><use href="#i-tabx"/></svg>
<svg style="left:429.5px;top:90.5px;width:15px;height:15px;color:#7d8189;"><use href="#i-add"/></svg>
<svg style="left:1616.5px;top:90.5px;width:15px;height:15px;color:#e0e0e0;"><use href="#i-expand"/></svg>
<div style="left:282px;top:112px;width:1356px;height:41px;background:#363d4a;"></div>
<div style="left:286px;top:116px;width:28px;height:31px;background:#252b34;border-radius:2px"></div>
<svg style="left:293.0px;top:124.0px;width:15px;height:15px;color:#70bafa;"><use href="#i-cursor"/></svg>
<div style="left:319.5px;top:116px;width:1px;height:31px;background:#4a505c;"></div>
<div style="left:423.3px;top:116px;width:1px;height:31px;background:#4a505c;"></div>
<div style="left:559.5px;top:116px;width:1px;height:31px;background:#4a505c;"></div>
<div style="left:663.3px;top:116px;width:1px;height:31px;background:#4a505c;"></div>
<div style="left:735.5px;top:116px;width:1px;height:31px;background:#4a505c;"></div>
<div style="left:775.5px;top:116px;width:1px;height:31px;background:#4a505c;"></div>
<div style="left:830.3px;top:116px;width:1px;height:31px;background:#4a505c;"></div>
<svg style="left:332.0px;top:123.0px;width:16px;height:16px;color:#e0e0e0;"><use href="#i-move"/></svg>
<svg style="left:364.0px;top:123.0px;width:16px;height:16px;color:#e0e0e0;"><use href="#i-rotate"/></svg>
<svg style="left:395.7px;top:123.0px;width:16px;height:16px;color:#e0e0e0;"><use href="#i-scale"/></svg>
<svg style="left:436.5px;top:123.0px;width:16px;height:16px;color:#e0e0e0;"><use href="#i-listsel"/></svg>
<svg style="left:468.3px;top:123.0px;width:16px;height:16px;color:#6e727b;"><use href="#i-curveadd"/></svg>
<svg style="left:500.0px;top:123.0px;width:16px;height:16px;color:#e0e0e0;"><use href="#i-hand"/></svg>
<svg style="left:531.7px;top:123.0px;width:16px;height:16px;color:#e0e0e0;"><use href="#i-ruler"/></svg>
<svg style="left:572.8px;top:123.0px;width:16px;height:16px;color:#e0e0e0;"><use href="#i-snap"/></svg>
<svg style="left:603.7px;top:123.0px;width:16px;height:16px;color:#e0e0e0;"><use href="#i-snapgrid"/></svg>
<svg style="left:635.8px;top:123.0px;width:16px;height:16px;color:#e0e0e0;"><use href="#i-dots"/></svg>
<svg style="left:675.8px;top:123.0px;width:16px;height:16px;color:#81858d;"><use href="#i-lock"/></svg>
<svg style="left:707.8px;top:123.0px;width:16px;height:16px;color:#6e727b;"><use href="#i-group"/></svg>
<svg style="left:747.8px;top:123.0px;width:16px;height:16px;color:#e0e0e0;"><use href="#i-bone"/></svg>
<span id="t48" style="left:788.00px;top:120.78px;font-size:14.5px;line-height:20px;color:#cdcfd2;letter-spacing:-0.333px;">View</span>
<div style="left:282px;top:151px;width:1356px;height:708px;background:#4d4d4d;border:2px solid;border-color:#4f83b6 #6893bc #6893bc #4b7aa8;border-radius:1.500px;box-sizing:border-box"></div>
<div style="left:284px;top:153px;width:1352px;height:704px;overflow:hidden">
<div style="left:13px;top:42px;width:245px;height:1px;background:#d6384f;"></div>
<div style="left:1110px;top:42px;width:244px;height:1px;background:#d6384f;"></div>
<div style="left:258px;top:13px;width:1px;height:692px;background:#96c53a;"></div>
<div style="left:258px;top:681px;width:853px;height:1px;background:#5c5ca8;"></div>
<div style="left:1110px;top:42px;width:1px;height:639px;background:#5c5ca8;"></div>
<div style="left:685px;top:42px;width:426px;height:1px;background:#9d50b2;"></div>
<div style="left:258px;top:42px;width:427px;height:1px;background:#c653c0;"></div>
<div style="left:684.5px;top:42px;width:1px;height:321px;background:#c653c0;"></div>
<div style="left:258px;top:362.5px;width:427px;height:1px;background:#c653c0;"></div>
<div style="left:258px;top:42px;width:1px;height:321px;background:#c653c0;"></div>
<svg style="left:258.20000000000005px;top:43.099999999999994px;width:426px;height:319.500px" viewBox="0 0 320 240" preserveAspectRatio="none" shape-rendering="auto">
<rect width="320" height="240" fill="#84c669"/><defs><pattern id="gr" width="48" height="48" patternUnits="userSpaceOnUse"><path d="M4 6l1.500 1.500L7 6M25 4l1.500 1.500L28 4M40 14l1.500 1.500L43 14M12 21l1.500 1.500L15 21M31 27l1.500 1.500L33 27M6 38l1.500 1.500L9 38M44 41l1.500 1.500L47 41M21 44l1.500 1.500L24 44" fill="none" stroke="#6db75a" stroke-width="1"/><path d="M13 9h2v1h-2zM16 9h2v1h-2zM14 10l1.500 1.500L17 10M33 17h2v1h-2zM36 17h2v1h-2zM34 18l1.500 1.500L37 18M19 33h2v1h-2zM22 33h2v1h-2zM20 34l1.500 1.500L23 34M39 33h2v1h-2zM42 33h2v1h-2z" fill="#9adf85" stroke="#6db75a" stroke-width=".6"/></pattern><g id="fl"><path d="M-1-3h2v1h1v1h1v2h-1v1h-1v1h-2v-1h-1v-1h-1v-2h1v-1h1z" fill="#f39a2e"/><path d="M-1-2h2v1h1v2h-1v1h-2v-1h-1v-2h1z" fill="#ffd27a"/><rect x="-1" y="-1" width="2" height="2" fill="#fff"/></g><g id="ur"><path d="M3 0h7v2h4v2h1v9h-1v1H1v-1H0V4h1V2h2z" fill="#40233a"/><path d="M1 5h13v7H1z" fill="#d93a3a"/><path d="M4 1h5v5H4z" fill="#ea473d"/><path d="M2 3h2v3H2z" fill="#d93a3a"/><path d="M9 3h4v4H9z" fill="#9fb0dc"/><path d="M9 4h4v1H9zM9 6h4v.6H9z" fill="#6e7fb8"/><path d="M1 8.500h13v1H1zM1 11h13v1H1z" fill="#b92c38"/><path d="M5 7.500h1.300v1H5zM7 7.500h1.300v1H7z" fill="#fff" opacity=".85"/><path d="M1 6h1v6H1zM13 7h1v5h-1z" fill="#8796c6"/><path d="M1 12h13v1H1z" fill="#5b6aa6"/><path d="M2 12h2v1H2zM5 12h2v1H5zM8 12h2v1H8zM11 12h2v1h-2z" fill="#b9c6ea"/></g><g id="ub"><path d="M3 0h7v2h4v2h1v9h-1v1H1v-1H0V4h1V2h2z" fill="#40233a"/><path d="M1 5h13v7H1z" fill="#1f8fe6"/><path d="M4 1h5v5H4z" fill="#3aa5f0"/><path d="M2 3h2v3H2z" fill="#1f8fe6"/><path d="M9 3h4v4H9z" fill="#9fb0dc"/><path d="M9 4h4v1H9zM9 6h4v.6H9z" fill="#6e7fb8"/><path d="M1 8.500h13v1H1zM1 11h13v1H1z" fill="#1a73c4"/><path d="M5 7.500h1.300v1H5zM7 7.500h1.300v1H7z" fill="#fff" opacity=".85"/><path d="M1 6h1v6H1zM13 7h1v5h-1z" fill="#8796c6"/><path d="M1 12h13v1H1z" fill="#5b6aa6"/><path d="M2 12h2v1H2zM5 12h2v1H5zM8 12h2v1H8zM11 12h2v1h-2z" fill="#b9c6ea"/></g><g id="ug"><path d="M3 0h7v2h4v2h1v9h-1v1H1v-1H0V4h1V2h2z" fill="#40233a"/><path d="M1 5h13v7H1z" fill="#86c466"/><path d="M4 1h5v5H4z" fill="#a4d77f"/><path d="M2 3h2v3H2z" fill="#86c466"/><path d="M9 3h4v4H9z" fill="#9fb0dc"/><path d="M9 4h4v1H9zM9 6h4v.6H9z" fill="#6e7fb8"/><path d="M1 8.500h13v1H1zM1 11h13v1H1z" fill="#69a852"/><path d="M5 7.500h1.300v1H5zM7 7.500h1.300v1H7z" fill="#fff" opacity=".85"/><path d="M1 6h1v6H1zM13 7h1v5h-1z" fill="#8796c6"/><path d="M1 12h13v1H1z" fill="#5b6aa6"/><path d="M2 12h2v1H2zM5 12h2v1H5zM8 12h2v1H8zM11 12h2v1h-2z" fill="#b9c6ea"/></g><g id="uo"><path d="M3 0h7v2h4v2h1v9h-1v1H1v-1H0V4h1V2h2z" fill="#40233a"/><path d="M1 5h13v7H1z" fill="#f2a13a"/><path d="M4 1h5v5H4z" fill="#f7b344"/><path d="M2 3h2v3H2z" fill="#f2a13a"/><path d="M9 3h4v4H9z" fill="#9fb0dc"/><path d="M9 4h4v1H9zM9 6h4v.6H9z" fill="#6e7fb8"/><path d="M1 8.500h13v1H1zM1 11h13v1H1z" fill="#d9822b"/><path d="M5 7.500h1.300v1H5zM7 7.500h1.300v1H7z" fill="#fff" opacity=".85"/><path d="M1 6h1v6H1zM13 7h1v5h-1z" fill="#8796c6"/><path d="M1 12h13v1H1z" fill="#5b6aa6"/><path d="M2 12h2v1H2zM5 12h2v1H5zM8 12h2v1H8zM11 12h2v1h-2z" fill="#b9c6ea"/></g><g id="bb"><path d="M5 0h6v3h3v2h1v9H1V5h1V3h3z" fill="#40233a"/><path d="M6 1h4v3H6zM3 4h10v2H3zM2 6h12v8H2z" fill="#1f8fe6"/><path d="M7 1.800h2v1.200H7z" fill="#3aa5f0"/><path d="M3.500 6.500h1.500v2H3.500zM6 6.500h1.600v2H6zM8.400 6.500H10v2H8.400zM11 6.500h1.500v2H11zM3.500 10h1.500v2.500H3.500zM6 10h1.600v2.500H6zM8.400 10H10v2.500H8.400zM11 10h1.500v2.500H11z" fill="#fff" opacity=".9"/><path d="M7 13h2v1H7z" fill="#49c04a"/></g><g id="br"><path d="M5 0h6v3h3v2h1v9H1V5h1V3h3z" fill="#40233a"/><path d="M6 1h4v3H6zM3 4h10v2H3zM2 6h12v8H2z" fill="#e0413c"/><path d="M7 1.800h2v1.200H7z" fill="#f06a5a"/><path d="M3.500 6.500h1.500v2H3.500zM6 6.500h1.600v2H6zM8.400 6.500H10v2H8.400zM11 6.500h1.500v2H11zM3.500 10h1.500v2.500H3.500zM6 10h1.600v2.500H6zM8.400 10H10v2.500H8.400zM11 10h1.500v2.500H11z" fill="#fff" opacity=".9"/><path d="M7 13h2v1H7z" fill="#49c04a"/></g><g id="bo"><path d="M5 0h6v3h3v2h1v9H1V5h1V3h3z" fill="#40233a"/><path d="M6 1h4v3H6zM3 4h10v2H3zM2 6h12v8H2z" fill="#f5a134"/><path d="M7 1.800h2v1.200H7z" fill="#ffc65a"/><path d="M3.500 6.500h1.500v2H3.500zM6 6.500h1.600v2H6zM8.400 6.500H10v2H8.400zM11 6.500h1.500v2H11zM3.500 10h1.500v2.500H3.500zM6 10h1.600v2.500H6zM8.400 10H10v2.500H8.400zM11 10h1.500v2.500H11z" fill="#fff" opacity=".9"/><path d="M7 13h2v1H7z" fill="#49c04a"/></g><g id="bo2"><path d="M0 0h9v2h6v11H9v3H3v-5H0z" fill="#40233a"/><path d="M1 1h7v9H1zM9 3h5v9H9zM4 8h5v7H4z" fill="#f5a134"/><path d="M2.500 2.500h4v1.500h-4zM10 4.500h3v1.500h-3zM5 9.500h3v1.500H5z" fill="#ffc65a"/><path d="M10 7.500h1v1h-1zM12 7.500h1v1h-1zM10 9.500h1v1h-1zM12 9.500h1v1h-1zM5 12h1v1H5zM7 12h1v1H7zM5 13.700h1v1H5zM7 13.700h1v1H7zM2 5.500h1v1H2zM2 7.500h1v1H2z" fill="#fff" opacity=".9"/></g><g id="gz" fill="#a7c99b" opacity=".85"><circle r="2.400"/><path d="M-.7-5.500h1.400v2h-1.400zM-.7 3.500h1.400v2h-1.400zM-5.500-.7h2v1.400h-2zM3.500-.7h2v1.400h-2z"/></g></defs><rect width="320" height="240" fill="url(#gr)"/><defs><pattern id="wv" width="14" height="14" patternUnits="userSpaceOnUse"><path d="M1 2h1v1H1zM3 2h2v1H3zM6 2h1v1H6zM9 9h1v1H9zM11 9h2v1h-2zM4 6h2v1H4zM7 6h1v1H7z" fill="#d9f8ff"/></pattern></defs><rect x="277" y="2.5" width="39" height="40.9" rx="5.5" fill="#6cb95d"/><rect x="277.7" y="3.5" width="37.60000000000002" height="39.199999999999996" rx="4.8" fill="#e9965b"/><rect x="277.7" y="5.8" width="37.60000000000002" height="36.9" rx="4.8" fill="#dcf9ff"/><rect x="278.4" y="6.8" width="36.200000000000045" height="35.2" rx="4.2" fill="#42bdea"/><rect x="278.4" y="8.8" width="36.200000000000045" height="33.2" rx="4.2" fill="#79e2fb"/><rect x="281" y="11.5" width="31" height="27.9" rx="2" fill="url(#wv)"/><rect x="3.5" y="67.5" width="41.5" height="40.5" rx="5.5" fill="#6cb95d"/><rect x="4.2" y="68.5" width="40.099999999999994" height="38.8" rx="4.8" fill="#e9965b"/><rect x="4.2" y="70.8" width="40.099999999999994" height="36.5" rx="4.8" fill="#dcf9ff"/><rect x="4.9" y="71.8" width="38.7" height="34.8" rx="4.2" fill="#42bdea"/><rect x="4.9" y="73.8" width="38.7" height="32.8" rx="4.2" fill="#79e2fb"/><rect x="7.5" y="76.5" width="33.5" height="27.5" rx="2" fill="url(#wv)"/><rect x="244" y="68" width="72" height="87" rx="5.5" fill="#6cb95d"/><rect x="228" y="88" width="34" height="53" rx="5.5" fill="#6cb95d"/><rect x="244.7" y="69" width="70.60000000000002" height="85.30000000000001" rx="4.8" fill="#e9965b"/><rect x="228.7" y="89" width="32.60000000000002" height="51.30000000000001" rx="4.8" fill="#e9965b"/><rect x="244.7" y="71.3" width="70.60000000000002" height="83.00000000000001" rx="4.8" fill="#dcf9ff"/><rect x="228.7" y="91.3" width="32.60000000000002" height="49.000000000000014" rx="4.8" fill="#dcf9ff"/><rect x="245.4" y="72.3" width="69.20000000000002" height="81.3" rx="4.2" fill="#42bdea"/><rect x="229.4" y="92.3" width="31.200000000000017" height="47.3" rx="4.2" fill="#42bdea"/><rect x="245.4" y="74.3" width="69.20000000000002" height="79.3" rx="4.2" fill="#79e2fb"/><rect x="229.4" y="94.3" width="31.200000000000017" height="45.3" rx="4.2" fill="#79e2fb"/><rect x="248" y="77" width="64" height="74" rx="2" fill="url(#wv)"/><rect x="232" y="97" width="26" height="40" rx="2" fill="url(#wv)"/><rect x="128" y="224" width="64" height="16" fill="#5dd052"/><rect x="128.400" y="224.400" width="63.200" height="15.600" fill="none" stroke="#49b544" stroke-width=".8"/><use href="#fl" x="148" y="4"/><use href="#fl" x="156" y="11"/><use href="#fl" x="244" y="19"/><use href="#fl" x="252" y="27"/><use href="#fl" x="61" y="27"/><use href="#fl" x="84" y="35"/><use href="#fl" x="116" y="35"/><use href="#fl" x="92" y="43"/><use href="#fl" x="124" y="43"/><use href="#fl" x="180" y="67"/><use href="#fl" x="188" y="75"/><use href="#fl" x="196" y="83"/><use href="#fl" x="164" y="99"/><use href="#fl" x="172" y="108"/><use href="#fl" x="100" y="115"/><use href="#fl" x="108" y="123"/><use href="#fl" x="132" y="131"/><use href="#fl" x="140" y="139"/><use href="#fl" x="116" y="147"/><use href="#fl" x="124" y="155"/><use href="#fl" x="196" y="115"/><use href="#fl" x="204" y="123"/><use href="#fl" x="180" y="147"/><use href="#fl" x="188" y="155"/><use href="#fl" x="36" y="147"/><use href="#fl" x="44" y="155"/><use href="#fl" x="36" y="164"/><use href="#fl" x="44" y="171"/><use href="#fl" x="4" y="179"/><use href="#fl" x="12" y="187"/><use href="#fl" x="52" y="211"/><use href="#fl" x="60" y="220"/><use href="#fl" x="228" y="227"/><use href="#fl" x="236" y="235"/><use href="#fl" x="308" y="195"/><use href="#fl" x="316" y="203"/><use href="#fl" x="308" y="211"/><use href="#fl" x="316" y="220"/><use href="#gz" x="0" y="0"/><use href="#gz" x="32" y="0"/><use href="#gz" x="256" y="32"/><use href="#gz" x="256" y="48"/><use href="#gz" x="288" y="48"/><use href="#gz" x="144" y="80"/><use href="#gz" x="176" y="80"/><use href="#gz" x="192" y="96"/><use href="#gz" x="192" y="128"/><use href="#gz" x="16" y="112"/><use href="#gz" x="112" y="128"/><use href="#gz" x="96" y="144"/><use href="#gz" x="128" y="144"/><use href="#gz" x="112" y="160"/><use href="#gz" x="256" y="192"/><use href="#gz" x="272" y="192"/><use href="#gz" x="288" y="192"/><use href="#gz" x="272" y="208"/><use href="#gz" x="128" y="208"/><use href="#gz" x="144" y="208"/><use href="#gz" x="160" y="208"/><use href="#gz" x="176" y="208"/><use href="#ur" x="0.5" y="0.5"/><use href="#ur" x="32.5" y="0.5"/><use href="#ur" x="256.5" y="32.5"/><use href="#br" x="288.5" y="32.5"/><use href="#ur" x="256.5" y="48.5"/><use href="#ur" x="288.5" y="48.5"/><use href="#ur" x="144.5" y="80.5"/><use href="#ur" x="176.5" y="80.5"/><use href="#ur" x="192.5" y="96.5"/><use href="#ur" x="192.5" y="128.5"/><use href="#bb" x="16.5" y="96.5"/><use href="#ug" x="16.5" y="112.5"/><use href="#ub" x="112.5" y="128.5"/><use href="#ub" x="96.5" y="144.5"/><use href="#ub" x="128.5" y="144.5"/><use href="#ub" x="112.5" y="160.5"/><use href="#bo2" x="272.5" y="160.5"/><use href="#bo" x="272.5" y="176.5"/><use href="#ur" x="256.5" y="192.5"/><use href="#uo" x="272.5" y="192.5"/><use href="#ur" x="288.5" y="192.5"/><use href="#ur" x="272.5" y="208.5"/><use href="#ur" x="128.5" y="208.5"/><use href="#ur" x="144.5" y="208.5"/><use href="#ur" x="160.5" y="208.5"/><use href="#ur" x="176.5" y="208.5"/></svg>
<span id="t49" style="left:258.60px;top:64.14px;font-size:42.3px;line-height:20px;color:#1c1c1c;letter-spacing:1.263px;-webkit-text-stroke:6.7px #1c1c1c;">Turn 1: Player</span>
<span id="t50" style="left:258.60px;top:64.14px;font-size:42.3px;line-height:20px;color:#fff;letter-spacing:1.263px;-webkit-text-stroke:1.3px #fff;">Turn 1: Player</span>
<span id="t51" style="left:259.30px;top:114.08px;font-size:22px;line-height:20px;color:#1c1c1c;letter-spacing:0.108px;-webkit-text-stroke:3.0px #1c1c1c;">Success: Route Enemy, Capture, or Defeat Boss</span>
<span id="t52" style="left:259.30px;top:114.08px;font-size:22px;line-height:20px;color:#fff;letter-spacing:0.108px;-webkit-text-stroke:0.7px #fff;">Success: Route Enemy, Capture, or Defeat Boss</span>
<span id="t53" style="left:259.30px;top:149.58px;font-size:22px;line-height:20px;color:#1c1c1c;letter-spacing:0.331px;-webkit-text-stroke:3.0px #1c1c1c;">Failure: All Player Units Defeated, Ally Defeated, or 5 Turns Pass</span>
<span id="t54" style="left:259.30px;top:149.58px;font-size:22px;line-height:20px;color:#fff;letter-spacing:0.331px;-webkit-text-stroke:0.7px #fff;">Failure: All Player Units Defeated, Ally Defeated, or 5 Turns Pass</span>
<span id="t55" style="left:425.50px;top:644.08px;font-size:22px;line-height:20px;color:#1c1c1c;letter-spacing:0.390px;-webkit-text-stroke:3.0px #1c1c1c;">: Move Cursor</span>
<span id="t56" style="left:425.50px;top:644.08px;font-size:22px;line-height:20px;color:#fff;letter-spacing:0.390px;-webkit-text-stroke:0.7px #fff;">: Move Cursor</span>
<span id="t57" style="left:615.50px;top:644.08px;font-size:22px;line-height:20px;color:#1c1c1c;letter-spacing:-0.251px;-webkit-text-stroke:3.0px #1c1c1c;">: Select</span>
<span id="t58" style="left:615.50px;top:644.08px;font-size:22px;line-height:20px;color:#fff;letter-spacing:-0.251px;-webkit-text-stroke:0.7px #fff;">: Select</span>
<span id="t59" style="left:735.20px;top:644.08px;font-size:22px;line-height:20px;color:#1c1c1c;letter-spacing:-0.118px;-webkit-text-stroke:3.0px #1c1c1c;">: Cancel</span>
<span id="t60" style="left:735.20px;top:644.08px;font-size:22px;line-height:20px;color:#fff;letter-spacing:-0.118px;-webkit-text-stroke:0.7px #fff;">: Cancel</span>
<span id="t61" style="left:861.00px;top:644.08px;font-size:22px;line-height:20px;color:#1c1c1c;letter-spacing:-0.060px;-webkit-text-stroke:3.0px #1c1c1c;">: Skip</span>
<span id="t62" style="left:861.00px;top:644.08px;font-size:22px;line-height:20px;color:#fff;letter-spacing:-0.060px;-webkit-text-stroke:0.7px #fff;">: Skip</span>
<span id="t63" style="left:386.80px;top:644.08px;font-size:22px;line-height:20px;color:#1c1c1c;-webkit-text-stroke:3.0px #1c1c1c;">/</span>
<span id="t64" style="left:386.80px;top:644.08px;font-size:22px;line-height:20px;color:#fff;-webkit-text-stroke:0.7px #fff;">/</span>
<svg style="left:262.4px;top:644px;width:13.500px;height:18.500px" viewBox="0 0 13.500 18.500"><path d="M2.300 1h8.900a1.300 1.300 0 0 1 1.300 1.300V13l-1.800 3.300v1.200H2.800v-1.200L1 13V2.300A1.300 1.300 0 0 1 2.300 1z" fill="#e9ebf7" stroke="#3e3e60" stroke-width="1.700" stroke-linejoin="round"/><path d="M3 15.800h7.500v1.500H3z" fill="#a3a8cc"/><ellipse cx="6.750" cy="5.300" rx="1.500" ry="2.400" fill="#c9cde8" stroke="#8c90b5" stroke-width=".7"/></svg>
<svg style="left:593px;top:644px;width:13.500px;height:18.500px" viewBox="0 0 13.500 18.500"><path d="M2.300 1h8.900a1.300 1.300 0 0 1 1.300 1.300V13l-1.800 3.300v1.200H2.800v-1.200L1 13V2.300A1.300 1.300 0 0 1 2.300 1z" fill="#e9ebf7" stroke="#3e3e60" stroke-width="1.700" stroke-linejoin="round"/><path d="M3 15.800h7.500v1.500H3z" fill="#a3a8cc"/><path d="M1.900 1.900h4.800v6.300H1.900z" fill="#1ea7f0"/><ellipse cx="6.750" cy="5.300" rx="1.500" ry="2.400" fill="#c9cde8" stroke="#8c90b5" stroke-width=".7"/></svg>
<svg style="left:713.5px;top:644px;width:13.500px;height:18.500px" viewBox="0 0 13.500 18.500"><path d="M2.300 1h8.900a1.300 1.300 0 0 1 1.300 1.300V13l-1.800 3.300v1.200H2.800v-1.200L1 13V2.300A1.300 1.300 0 0 1 2.300 1z" fill="#e9ebf7" stroke="#3e3e60" stroke-width="1.700" stroke-linejoin="round"/><path d="M3 15.800h7.500v1.500H3z" fill="#a3a8cc"/><path d="M6.800 1.900h4.800v6.300H6.800z" fill="#1ea7f0"/><ellipse cx="6.750" cy="5.300" rx="1.500" ry="2.400" fill="#c9cde8" stroke="#8c90b5" stroke-width=".7"/></svg>
<svg style="left:839.5px;top:644px;width:13.500px;height:18.500px" viewBox="0 0 13.500 18.500"><path d="M2.300 1h8.900a1.300 1.300 0 0 1 1.300 1.300V13l-1.800 3.300v1.200H2.800v-1.200L1 13V2.300A1.300 1.300 0 0 1 2.300 1z" fill="#e9ebf7" stroke="#3e3e60" stroke-width="1.700" stroke-linejoin="round"/><path d="M3 15.800h7.500v1.500H3z" fill="#a3a8cc"/><path d="M6.800 1.900h4.800v6.300H6.800z" fill="#1ea7f0"/><ellipse cx="6.750" cy="5.300" rx="1.500" ry="2.400" fill="#c9cde8" stroke="#8c90b5" stroke-width=".7"/></svg>
<svg style="left:309px;top:635.2px;width:14.600px;height:15.600px" viewBox="0 0 14.600 15.600"><rect x=".7" y=".7" width="13.200" height="14.200" rx="1.500" fill="#e9ebf7" stroke="#3e3e60" stroke-width="1.600"/><rect x="1.500" y="11" width="11.600" height="3.200" fill="#a9aed0"/><path d="M7.300 2.500l3 3.200H8.300v3.200h-2V5.700H4.300z" fill="#45456b" transform="rotate(0 7.300 5.800)"/></svg>
<svg style="left:287.5px;top:656px;width:14.600px;height:15.600px" viewBox="0 0 14.600 15.600"><rect x=".7" y=".7" width="13.200" height="14.200" rx="1.500" fill="#e9ebf7" stroke="#3e3e60" stroke-width="1.600"/><rect x="1.500" y="11" width="11.600" height="3.200" fill="#a9aed0"/><path d="M7.300 2.500l3 3.200H8.300v3.200h-2V5.700H4.300z" fill="#45456b" transform="rotate(-90 7.300 5.800)"/></svg>
<svg style="left:309px;top:656px;width:14.600px;height:15.600px" viewBox="0 0 14.600 15.600"><rect x=".7" y=".7" width="13.200" height="14.200" rx="1.500" fill="#e9ebf7" stroke="#3e3e60" stroke-width="1.600"/><rect x="1.500" y="11" width="11.600" height="3.200" fill="#a9aed0"/><path d="M7.300 2.500l3 3.200H8.300v3.200h-2V5.700H4.300z" fill="#45456b" transform="rotate(180 7.300 5.800)"/></svg>
<svg style="left:329.79999999999995px;top:656px;width:14.600px;height:15.600px" viewBox="0 0 14.600 15.600"><rect x=".7" y=".7" width="13.200" height="14.200" rx="1.500" fill="#e9ebf7" stroke="#3e3e60" stroke-width="1.600"/><rect x="1.500" y="11" width="11.600" height="3.200" fill="#a9aed0"/><path d="M7.300 2.500l3 3.200H8.300v3.200h-2V5.700H4.300z" fill="#45456b" transform="rotate(90 7.300 5.800)"/></svg>
<svg style="left:361px;top:644.5px;width:17.500px;height:17.500px" viewBox="0 0 17.500 17.500"><path d="M6.300 1.200h4.900v5.100h5.100v4.900h-5.100v5.100H6.300v-5.100H1.200V6.300h5.100z" fill="#f2f2f8" stroke="#3e3e60" stroke-width="1.700" stroke-linejoin="round"/></svg>
<svg style="left:404.5px;top:646.5px;width:14px;height:16.500px" viewBox="0 0 14 16.500"><rect x=".8" y=".8" width="12.400" height="11.400" rx="4" fill="#e9ebf7" stroke="#3e3e60" stroke-width="1.600"/><path d="M5.500 3.500v4.500h3.500" fill="none" stroke="#8c90b5" stroke-width="1.300"/><path d="M3.500 14h7" stroke="#c9cde8" stroke-width="1.500"/></svg>
<svg style="left:263.5px;top:23.3px;width:13px;height:13px;color:#7f8fd0;opacity:.8"><use href="#i-tilemap"/></svg>
<span id="t65" style="left:283.00px;top:20.28px;font-size:14.5px;line-height:20px;color:#b4b4b4;letter-spacing:0.038px;">Ground</span>
<svg style="left:249px;top:34px;width:18px;height:18px" viewBox="-9 -9 18 18"><path d="M0-7.500V7.500M-7.500 0H7.500" stroke="#111" stroke-width="3.200"/><circle r="3.500" fill="#fff" stroke="#111" stroke-width="1.200"/><path d="M0-7V7M-7 0H7" stroke="#fff" stroke-width="1.500"/></svg>
<svg style="left:258.29999999999995px;top:42.5px;width:28.500px;height:37.500px" viewBox="0 0 19 25"><path d="M1 1v19l4.500-4.200 3.300 7.500 3-1.300-3.200-7.300H15z" fill="#fff" stroke="#111" stroke-width="1" stroke-linejoin="round"/></svg>
<svg style="left:23.8px;top:24.8px;width:16px;height:16px;color:#e6e6e6;"><use href="#i-center"/></svg>
<svg style="left:55.8px;top:24.8px;width:16px;height:16px;color:#e6e6e6;"><use href="#i-zminus"/></svg>
<svg style="left:148.0px;top:24.8px;width:16px;height:16px;color:#e6e6e6;"><use href="#i-zplus"/></svg>
<span id="t66" style="left:84.50px;top:22.78px;font-size:14.5px;line-height:20px;color:#e4e4e4;letter-spacing:-0.636px;text-shadow:0 0 2px #000">133.1 %</span>
<div style="left:0px;top:0px;width:1352px;height:13px;background:#1d212a;"></div>
<div style="left:0px;top:0px;width:13px;height:704px;background:#1d212a;"></div>
<div style="left:0px;top:0px;width:13px;height:13px;background:#7f7f7f;"></div>
<div style="left:24px;top:9px;width:1px;height:4px;background:#9a9da2;"></div>
<div style="left:57px;top:9px;width:1px;height:4px;background:#9a9da2;"></div>
<div style="left:91px;top:3px;width:1px;height:10px;background:#9a9da2;"></div>
<div style="left:124px;top:9px;width:1px;height:4px;background:#9a9da2;"></div>
<div style="left:157px;top:9px;width:1px;height:4px;background:#9a9da2;"></div>
<div style="left:190px;top:9px;width:1px;height:4px;background:#9a9da2;"></div>
<div style="left:224px;top:9px;width:1px;height:4px;background:#9a9da2;"></div>
<div style="left:257px;top:0px;width:1px;height:13px;background:#9a9da2;"></div>
<span id="t67" style="left:260.25px;top:-3.33px;font-size:9.6px;line-height:20px;color:#b9bbbf;">0</span>
<div style="left:290px;top:9px;width:1px;height:4px;background:#9a9da2;"></div>
<div style="left:324px;top:9px;width:1px;height:4px;background:#9a9da2;"></div>
<div style="left:357px;top:9px;width:1px;height:4px;background:#9a9da2;"></div>
<div style="left:390px;top:9px;width:1px;height:4px;background:#9a9da2;"></div>
<div style="left:423px;top:3px;width:1px;height:10px;background:#9a9da2;"></div>
<div style="left:457px;top:9px;width:1px;height:4px;background:#9a9da2;"></div>
<div style="left:490px;top:9px;width:1px;height:4px;background:#9a9da2;"></div>
<div style="left:523px;top:9px;width:1px;height:4px;background:#9a9da2;"></div>
<div style="left:557px;top:9px;width:1px;height:4px;background:#9a9da2;"></div>
<div style="left:590px;top:0px;width:1px;height:13px;background:#9a9da2;"></div>
<span id="t68" style="left:593.00px;top:-3.33px;font-size:9.6px;line-height:20px;color:#b9bbbf;letter-spacing:-0.838px;">250</span>
<div style="left:623px;top:9px;width:1px;height:4px;background:#9a9da2;"></div>
<div style="left:656px;top:9px;width:1px;height:4px;background:#9a9da2;"></div>
<div style="left:690px;top:9px;width:1px;height:4px;background:#9a9da2;"></div>
<div style="left:723px;top:9px;width:1px;height:4px;background:#9a9da2;"></div>
<div style="left:756px;top:3px;width:1px;height:10px;background:#9a9da2;"></div>
<div style="left:789px;top:9px;width:1px;height:4px;background:#9a9da2;"></div>
<div style="left:823px;top:9px;width:1px;height:4px;background:#9a9da2;"></div>
<div style="left:856px;top:9px;width:1px;height:4px;background:#9a9da2;"></div>
<div style="left:889px;top:9px;width:1px;height:4px;background:#9a9da2;"></div>
<div style="left:923px;top:0px;width:1px;height:13px;background:#9a9da2;"></div>
<span id="t69" style="left:925.75px;top:-3.33px;font-size:9.6px;line-height:20px;color:#b9bbbf;letter-spacing:-0.838px;">500</span>
<div style="left:956px;top:9px;width:1px;height:4px;background:#9a9da2;"></div>
<div style="left:989px;top:9px;width:1px;height:4px;background:#9a9da2;"></div>
<div style="left:1022px;top:9px;width:1px;height:4px;background:#9a9da2;"></div>
<div style="left:1056px;top:9px;width:1px;height:4px;background:#9a9da2;"></div>
<div style="left:1089px;top:3px;width:1px;height:10px;background:#9a9da2;"></div>
<div style="left:1122px;top:9px;width:1px;height:4px;background:#9a9da2;"></div>
<div style="left:1155px;top:9px;width:1px;height:4px;background:#9a9da2;"></div>
<div style="left:1189px;top:9px;width:1px;height:4px;background:#9a9da2;"></div>
<div style="left:1222px;top:9px;width:1px;height:4px;background:#9a9da2;"></div>
<div style="left:1255px;top:0px;width:1px;height:13px;background:#9a9da2;"></div>
<span id="t70" style="left:1258.50px;top:-3.33px;font-size:9.6px;line-height:20px;color:#b9bbbf;letter-spacing:-0.838px;">750</span>
<div style="left:1289px;top:9px;width:1px;height:4px;background:#9a9da2;"></div>
<div style="left:1322px;top:9px;width:1px;height:4px;background:#9a9da2;"></div>
<div style="left:0px;top:41px;width:13px;height:1px;background:#9a9da2;"></div>
<span style="left:1.3000000000000114px;top:39.69999999999999px;font-size:9.6px;line-height:10px;color:#b9bbbf;letter-spacing:-.55px;transform-origin:0 0;transform:rotate(-90deg)">0</span>
<div style="left:9px;top:74px;width:4px;height:1px;background:#9a9da2;"></div>
<div style="left:9px;top:108px;width:4px;height:1px;background:#9a9da2;"></div>
<div style="left:9px;top:141px;width:4px;height:1px;background:#9a9da2;"></div>
<div style="left:9px;top:174px;width:4px;height:1px;background:#9a9da2;"></div>
<div style="left:3px;top:208px;width:10px;height:1px;background:#9a9da2;"></div>
<div style="left:9px;top:241px;width:4px;height:1px;background:#9a9da2;"></div>
<div style="left:9px;top:274px;width:4px;height:1px;background:#9a9da2;"></div>
<div style="left:9px;top:307px;width:4px;height:1px;background:#9a9da2;"></div>
<div style="left:9px;top:341px;width:4px;height:1px;background:#9a9da2;"></div>
<div style="left:0px;top:374px;width:13px;height:1px;background:#9a9da2;"></div>
<span style="left:1.3000000000000114px;top:372.70000000000005px;font-size:9.6px;line-height:10px;color:#b9bbbf;letter-spacing:-.55px;transform-origin:0 0;transform:rotate(-90deg)">250</span>
<div style="left:9px;top:407px;width:4px;height:1px;background:#9a9da2;"></div>
<div style="left:9px;top:440px;width:4px;height:1px;background:#9a9da2;"></div>
<div style="left:9px;top:474px;width:4px;height:1px;background:#9a9da2;"></div>
<div style="left:9px;top:507px;width:4px;height:1px;background:#9a9da2;"></div>
<div style="left:3px;top:540px;width:10px;height:1px;background:#9a9da2;"></div>
<div style="left:9px;top:574px;width:4px;height:1px;background:#9a9da2;"></div>
<div style="left:9px;top:607px;width:4px;height:1px;background:#9a9da2;"></div>
<div style="left:9px;top:640px;width:4px;height:1px;background:#9a9da2;"></div>
<div style="left:9px;top:673px;width:4px;height:1px;background:#9a9da2;"></div>
<div style="left:1346.5px;top:17px;width:3px;height:673px;background:#5a5a5a;border-radius:1.500px"></div>
<div style="left:1346px;top:230.3px;width:4.5px;height:234px;background:#8c8c8c;border-radius:2px"></div>
<div style="left:16px;top:698.5px;width:1322px;height:3px;background:#5a5a5a;border-radius:1.500px"></div>
<div style="left:393.5px;top:697px;width:550.5px;height:5px;background:#8c8c8c;border-radius:2.500px"></div>
</div>
<div style="left:282px;top:863px;width:1356px;height:257px;background:#363d4a;border-radius:2px"></div>
<div style="left:286.5px;top:869px;width:1283px;height:177px;background:#21262e;border-radius:2px"></div>
<div style="left:286.5px;top:1050.3px;width:1283px;height:30px;background:#252b34;border-radius:2px;border-bottom:2px solid #1d2229;box-sizing:border-box"></div>
<span id="t71" style="left:291.40px;top:1054.78px;font-size:14.5px;line-height:20px;color:#8a8d93;letter-spacing:-0.021px;">Filter Messages</span>
<svg style="left:1547.5px;top:1056.8px;width:15px;height:15px;color:#e0e0e0;"><use href="#i-search"/></svg>
<svg style="left:1579.7px;top:874.3px;width:16px;height:16px;color:#e0e0e0;"><use href="#i-clear"/></svg>
<svg style="left:1611.7px;top:874.3px;width:16px;height:16px;color:#e0e0e0;"><use href="#i-copy"/></svg>
<div style="left:1573.5px;top:900.5px;width:61.5px;height:1px;background:#4a505c;"></div>
<div style="left:1573.5px;top:938px;width:61.5px;height:1px;background:#4a505c;"></div>
<svg style="left:1579.7px;top:911.7px;width:16px;height:16px;color:#e0e0e0;"><use href="#i-collapse"/></svg>
<div style="left:1606px;top:907.5px;width:27.5px;height:25.5px;background:#252b34;border-radius:2px"></div>
<svg style="left:1612.2px;top:912.2px;width:15px;height:15px;color:#70bafa;"><use href="#i-search"/></svg>
<div style="left:1574px;top:945.3px;width:60px;height:30px;background:#1e2229;border-radius:2px;border-bottom:2px solid #5aa0e0;box-sizing:border-box"></div>
<svg style="left:1580.0px;top:952.0px;width:15.5px;height:15.5px;color:#e0e0e0;"><use href="#i-popup"/></svg>
<span id="t72" style="left:1608.80px;top:950.08px;font-size:14.5px;line-height:20px;color:#70bafa;">0</span>
<div style="left:1574px;top:980.3px;width:60px;height:30px;background:#1e2229;border-radius:2px;border-bottom:2px solid #5aa0e0;box-sizing:border-box"></div>
<svg style="left:1580.0px;top:987.0px;width:15.5px;height:15.5px;color:#e0e0e0;"><use href="#i-staterr"/></svg>
<span id="t73" style="left:1608.80px;top:985.08px;font-size:14.5px;line-height:20px;color:#70bafa;">0</span>
<div style="left:1574px;top:1015.3px;width:60px;height:30px;background:#1e2229;border-radius:2px;border-bottom:2px solid #5aa0e0;box-sizing:border-box"></div>
<svg style="left:1580.0px;top:1022.0px;width:15.5px;height:15.5px;color:#e0e0e0;"><use href="#i-statwarn"/></svg>
<span id="t74" style="left:1608.80px;top:1020.08px;font-size:14.5px;line-height:20px;color:#70bafa;">0</span>
<div style="left:1574px;top:1050.3px;width:60px;height:30px;background:#1e2229;border-radius:2px;border-bottom:2px solid #5aa0e0;box-sizing:border-box"></div>
<svg style="left:1580.0px;top:1057.0px;width:15.5px;height:15.5px;color:#e0e0e0;"><use href="#i-pen"/></svg>
<span id="t75" style="left:1608.80px;top:1055.08px;font-size:14.5px;line-height:20px;color:#70bafa;">0</span>
<span id="t76" style="left:292.40px;top:1089.98px;font-size:14.5px;line-height:20px;color:#70bafa;letter-spacing:0.598px;">Output</span>
<span id="t77" style="left:354.00px;top:1089.98px;font-size:14.5px;line-height:20px;color:#cdcfd2;letter-spacing:0.506px;">Debugger</span>
<span id="t78" style="left:437.90px;top:1089.98px;font-size:14.5px;line-height:20px;color:#cdcfd2;letter-spacing:0.193px;">Audio</span>
<span id="t79" style="left:493.00px;top:1089.98px;font-size:14.5px;line-height:20px;color:#cdcfd2;letter-spacing:0.386px;">Animation</span>
<span id="t80" style="left:577.00px;top:1089.98px;font-size:14.5px;line-height:20px;color:#cdcfd2;letter-spacing:0.030px;">Shader Editor</span>
<span id="t81" style="left:682.10px;top:1089.98px;font-size:14.5px;line-height:20px;color:#cdcfd2;letter-spacing:0.111px;">MSBuild</span>
<svg style="left:1423.3px;top:1092.7px;width:15px;height:15px;color:#505662;"><use href="#i-bell"/></svg>
<span id="t82" style="left:1447.90px;top:1089.98px;font-size:14.5px;line-height:20px;color:#7f838b;letter-spacing:0.143px;">4.4.1.stable.mono</span>
<svg style="left:1579.7px;top:1092.2px;width:16px;height:16px;color:#e0e0e0;"><use href="#i-pin"/></svg>
<svg style="left:1611.7px;top:1092.2px;width:16px;height:16px;color:#e0e0e0;"><use href="#i-expbottom"/></svg>
<div style="left:1642px;top:84px;width:270px;height:28px;background:#252b34;border-radius:2px 2px 0 0"></div>
<div style="left:1642px;top:84px;width:85px;height:28px;background:#363d4a;"></div>
<div style="left:1642px;top:84px;width:85px;height:2px;background:#5a9ad6;"></div>
<div style="left:1642px;top:112px;width:270px;height:1008px;background:#363d4a;border-radius:0 0 2px 2px"></div>
<span id="t83" style="left:1652.20px;top:87.78px;font-size:14.5px;line-height:20px;color:#cdcfd2;letter-spacing:0.398px;">Inspector</span>
<span id="t84" style="left:1737.50px;top:87.78px;font-size:14.5px;line-height:20px;color:#7a7e85;letter-spacing:0.367px;">Node</span>
<span id="t85" style="left:1795.50px;top:87.78px;font-size:14.5px;line-height:20px;color:#7a7e85;letter-spacing:0.237px;">History</span>
<svg style="left:1895.8px;top:90.0px;width:16px;height:16px;color:#7a7e85;"><use href="#i-dots"/></svg>
<svg style="left:1652.0px;top:123.0px;width:16px;height:16px;color:#e0e0e0;"><use href="#i-newdoc"/></svg>
<svg style="left:1683.8px;top:123.0px;width:16px;height:16px;color:#e0e0e0;"><use href="#i-load"/></svg>
<svg style="left:1715.9px;top:123.0px;width:16px;height:16px;color:#e0e0e0;"><use href="#i-save"/></svg>
<svg style="left:1748.0px;top:123.0px;width:16px;height:16px;color:#e0e0e0;"><use href="#i-dots"/></svg>
<svg style="left:1834.2px;top:123.0px;width:16px;height:16px;color:#7c8088;"><use href="#i-chl"/></svg>
<svg style="left:1858.0px;top:123.0px;width:16px;height:16px;color:#7c8088;"><use href="#i-chrr"/></svg>
<svg style="left:1886.3px;top:123.0px;width:16px;height:16px;color:#e0e0e0;"><use href="#i-history"/></svg>
<div style="left:1646px;top:148px;width:230px;height:30.6px;background:#252b34;border-radius:2px"></div>
<svg style="left:1650.2px;top:156.0px;width:16px;height:16px;color:#e0e0e0;"><use href="#i-cs"/></svg>
<span id="t86" style="left:1673.50px;top:152.98px;font-size:14.5px;line-height:20px;color:#cdcfd2;letter-spacing:0.092px;">DemoMap.cs</span>
<svg style="left:1856.8px;top:156.5px;width:14px;height:14px;color:#e0e0e0;"><use href="#i-chd"/></svg>
<svg style="left:1885.6px;top:156.0px;width:16px;height:16px;color:#e0e0e0;"><use href="#i-docsearch"/></svg>
<div style="left:1646px;top:183px;width:230px;height:30.6px;background:#252b34;border-radius:2px;border-bottom:2px solid #1d2229;box-sizing:border-box"></div>
<span id="t87" style="left:1651.50px;top:187.58px;font-size:14.5px;line-height:20px;color:#8a8d93;letter-spacing:0.182px;">Filter Properties</span>
<svg style="left:1854.0px;top:190.1px;width:15px;height:15px;color:#e0e0e0;"><use href="#i-search"/></svg>
<svg style="left:1886.0px;top:189.6px;width:16px;height:16px;color:#e0e0e0;"><use href="#i-tools"/></svg>
<div style="left:1646px;top:218px;width:262px;height:897.5px;background:#21262e;border-radius:2px"></div>
<div style="left:1650.2px;top:222.4px;width:253.8px;height:24.5px;background:#40454f;border-radius:2px"></div>
<svg style="left:1734.4px;top:227.4px;width:15px;height:15px;color:#e0e0e0;"><use href="#i-cube"/></svg>
<span id="t88" style="left:1756.60px;top:222.65px;font-size:14px;line-height:20px;color:#cdcfd2;font-weight:700;letter-spacing:-0.104px;">Resource</span>
<div style="left:1650.2px;top:247px;width:253.8px;height:24px;background:#262b34;"></div>
<svg style="left:1651.7px;top:252.3px;width:13px;height:13px;color:#a5a8ad;"><use href="#i-chr"/></svg>
<span id="t89" style="left:1666.50px;top:248.35px;font-size:14px;line-height:20px;color:#cdcfd2;font-weight:700;letter-spacing:-0.134px;">Resource</span>
<span id="t90" style="left:1832.80px;top:248.18px;font-size:14.5px;line-height:20px;color:#7f838b;letter-spacing:0.012px;">(1 change)</span>
<div style="left:1650.2px;top:272.6px;width:253.8px;height:24.4px;background:#40454f;border-radius:2px"></div>
<svg style="left:1724.2px;top:277.4px;width:15px;height:15px;color:#e0e0e0;"><use href="#i-cube"/></svg>
<span id="t91" style="left:1746.50px;top:272.65px;font-size:14px;line-height:20px;color:#cdcfd2;font-weight:700;letter-spacing:0.248px;">RefCounted</span>
<div style="left:1687px;top:301px;width:179px;height:30.8px;background:#2b313b;border-radius:2px"></div>
<svg style="left:1694.0px;top:308.9px;width:14px;height:14px;color:#e0e0e0;"><use href="#i-add"/></svg>
<span id="t92" style="left:1741.10px;top:306.18px;font-size:14.5px;line-height:20px;color:#cdcfd2;letter-spacing:0.079px;">Add Metadata</span>
</div></body></html>
